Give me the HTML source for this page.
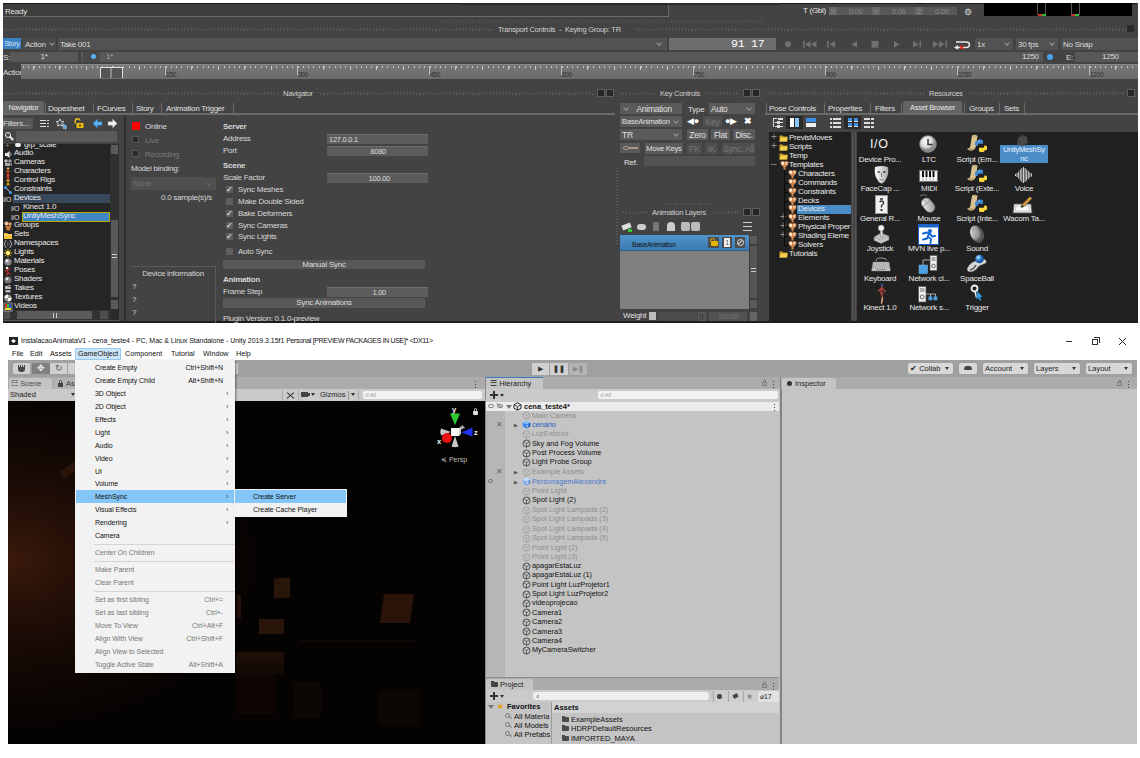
<!DOCTYPE html>
<html><head><meta charset="utf-8"><title>MeshSync</title>
<style>
html,body{margin:0;padding:0}
body{width:1140px;height:758px;position:relative;overflow:hidden;background:#fff;font-family:"Liberation Sans",sans-serif}
.a,#mb div,#mb span,#un div,#un span{position:absolute;white-space:nowrap}
#mb{position:absolute;left:0;top:0;width:1140px;height:325px;color:#dcdcdc;font-size:8px;line-height:10px;letter-spacing:-.25px}
#un{position:absolute;left:0;top:0;width:1140px;height:758px;color:#111;font-size:8px;line-height:10px;overflow:hidden}
.dots{height:3px;background:repeating-linear-gradient(115deg,#5a5a5a 0 1px,transparent 1px 3px)}
.f{background:#5c5c5c}
.dk{background:#1f1f1f}
</style></head><body>
<div id="mb">
<div style="left:3px;top:3px;width:1135px;height:320px;background:#434343;border-bottom:2.5px solid #1e1e1e;box-sizing:border-box"></div>
<!-- status bar -->
<div style="left:3px;top:3px;width:666px;height:14px;background:#3d3d3d;border-right:1px solid #6a6a6a;border-bottom:1px solid #6a6a6a;box-sizing:border-box"></div>
<div style="left:3px;top:3px;width:1134px;height:1px;background:#1a1a1a"></div>
<div style="left:5px;top:6.5px;font-size:8px;color:#e0e0e0">Ready</div>
<div style="left:460px;top:3px;width:320px;height:2px;background:#2a2a2a"></div>
<div class="dots" style="left:440px;top:20px;width:323px;opacity:.6"></div>
<div style="left:803px;top:6px;font-size:8px;color:#e8e8e8">T (Gbl)</div>
<div style="left:829px;top:7px;width:128px;height:8px;background:#585858;color:#8a8a8a;font-size:7.5px;line-height:9px"><span style="left:0;width:8px;height:8px;background:#666;text-align:center">X</span><span style="left:20px">0.00</span><span style="left:43px;width:8px;height:8px;background:#666;text-align:center">Y</span><span style="left:63px">0.00</span><span style="left:86px;width:8px;height:8px;background:#666;text-align:center">Z</span><span style="left:106px">0.00</span></div>
<div style="left:964px;top:7px;width:9px;height:8px;color:#ddd;font-size:9px">&#9881;</div>
<div style="left:984px;top:3px;width:148px;height:13px;background:#000"></div>
<div style="left:1037px;top:3px;width:1px;height:12px;background:#555"></div><div style="left:1045px;top:3px;width:1px;height:12px;background:#555"></div>
<div style="left:1071px;top:3px;width:1px;height:12px;background:#555"></div><div style="left:1079px;top:3px;width:1px;height:12px;background:#555"></div>
<div style="left:1038px;top:14px;width:4px;height:2px;background:#c33"></div><div style="left:1042px;top:14px;width:4px;height:2px;background:#3b3"></div>
<div style="left:1071px;top:14px;width:4px;height:2px;background:#c33"></div><div style="left:1075px;top:14px;width:4px;height:2px;background:#3b3"></div>
<!-- transport header -->
<div class="dots" style="left:3px;top:28px;width:490px"></div>
<div class="dots" style="left:633px;top:28px;width:494px"></div>
<div style="left:498px;top:25px;font-size:7.5px;color:#d0d0d0">Transport Controls&nbsp; -&nbsp; Keying Group: TR</div>
<div style="left:1127px;top:25px;width:7px;height:7px;background:#2a2a2a;border-radius:1px"></div>
<!-- row 1 -->
<div style="left:3px;top:38px;width:18px;height:11px;background:#3a80c2;color:#d8e8f8;font-size:7px;line-height:11px;text-align:center;overflow:hidden">Story</div>
<div style="left:23px;top:38px;width:33px;height:12px;background:#4a4a4a;font-size:8px;line-height:14.4px">&nbsp;Action<span style="left:27px;top:3px;width:3px;height:3px;border-right:1px solid #999;border-bottom:1px solid #999;transform:rotate(45deg)"></span></div>
<div style="left:58px;top:38px;width:609px;height:12px;background:#525252;font-size:8px;line-height:14.4px">&nbsp;Take 001<span style="right:6px;top:3px;width:3px;height:3px;border-right:1px solid #999;border-bottom:1px solid #999;transform:rotate(45deg)"></span></div>
<div style="left:669px;top:38px;width:107px;height:12px;background:#6e6e6e"></div>
<div style="left:731px;top:38px;font-size:11.5px;line-height:12px;color:#fff;font-family:'Liberation Mono',monospace;letter-spacing:-.2px">91 17</div>
<svg style="position:absolute;left:780px;top:38px" width="195" height="13" viewBox="0 0 195 13"><circle cx="8" cy="6.3" r="3" fill="#707070"/><path d="M23 2.8h1.6v7H23zM30.5 2.9v6.8L25 6.3zM36.5 2.9v6.8L31 6.3z" fill="#707070"/><path d="M47 2.8h1.6v7H47zM55.0 2.9v6.8L49.5 6.3z" fill="#707070"/><path d="M77.0 2.9v6.8L71.5 6.3z" fill="#707070"/><rect x="91.5" y="3" width="7" height="6.6" fill="#707070"/><path d="M114 2.9v6.8L119.5 6.3z" fill="#707070"/><path d="M133 2.9v6.8L138.5 6.3zM139.5 2.8h1.6v7h-1.6z" fill="#707070"/><path d="M153 2.9v6.8L158.5 6.3zM159 2.9v6.8L164.5 6.3zM165.5 2.8h1.6v7h-1.6z" fill="#707070"/><path d="M176 4h10q3.5 0 3.5 2.7T186 9.4h-9" fill="none" stroke="#e8e8e8" stroke-width="1.5"/><path d="M174 9.4l4-2.4v4.8z" fill="#e8e8e8"/><path d="M180 7.5l3.5 3.5M183.5 7.5L180 11" stroke="#e02020" stroke-width="1.5"/></svg>
<div style="left:975px;top:38px;width:38px;height:12px;background:#525252;line-height:14.4px">&nbsp;1x<span style="right:4px;top:3px;width:3px;height:3px;border-right:1px solid #999;border-bottom:1px solid #999;transform:rotate(45deg)"></span></div>
<div style="left:1016px;top:38px;width:42px;height:12px;background:#525252;line-height:14.4px">&nbsp;30 fps<span style="right:4px;top:3px;width:3px;height:3px;border-right:1px solid #999;border-bottom:1px solid #999;transform:rotate(45deg)"></span></div>
<div style="left:1061px;top:38px;width:77px;height:12px;background:#525252;line-height:14.4px">&nbsp;No Snap</div>
<!-- row 2 -->
<div style="left:3px;top:53px;font-size:8px;color:#ddd">S:</div>
<div style="left:10px;top:52px;width:68px;height:10px;background:#585858;text-align:center;font-size:8px">1*</div>
<div style="left:81px;top:52px;width:962px;height:10px;background:#585858"></div>
<div style="left:83px;top:52px;width:17px;height:10px;background:#4a4a4a"></div>
<div style="left:91px;top:54px;width:5px;height:5px;border-radius:3px;background:#5bb0f0"></div>
<div style="left:106px;top:52px;font-size:8px;color:#aaa">1*</div>
<div style="left:1022px;top:52px;font-size:8px;color:#ddd">1250</div>
<div style="left:1047px;top:54px;width:6px;height:6px;border-radius:3px;background:#4aa3ee"></div>
<div style="left:1066px;top:53px;font-size:8px;color:#ddd">E:</div>
<div style="left:1075px;top:52px;width:63px;height:10px;background:#585858;font-size:8px"><span style="left:27px">1250</span></div>
<!-- ruler -->
<div style="left:3px;top:68px;font-size:8px;color:#ddd">Action</div>
<div style="left:21px;top:64px;width:1117px;height:15px;background:linear-gradient(#787878,#6c6c6c)"></div>
<div style="left:21px;top:64px;width:1117px;height:1px;background:#8a8a8a"></div>
<div style="left:22.64px;top:66px;width:1114px;height:2px;background:repeating-linear-gradient(90deg,#c4c4c4 0 1px,transparent 1px 5.28px)"></div>
<div style="left:33.2px;top:66px;width:1103px;height:4px;background:repeating-linear-gradient(90deg,#c8c8c8 0 1px,transparent 1px 26.4px)"></div>
<div style="left:165.2px;top:66px;width:971px;height:9px;background:repeating-linear-gradient(90deg,#b8b8b8 0 1px,transparent 1px 132px)"></div>
<div style="left:100px;top:67px;width:23px;height:11px;background:#555;border:1px solid #ddd;border-bottom:none;box-sizing:border-box"></div>
<div style="left:110px;top:68px;width:2px;height:10px;background:#8a8a8a"></div>
<div id="rl" style="left:0;top:70px;font-size:6.5px;color:#2e2e2e"><span style="left:166px">150</span><span style="left:298px">300</span><span style="left:430px">450</span><span style="left:562px">600</span><span style="left:694px">750</span><span style="left:826px">900</span><span style="left:958px">1050</span><span style="left:1090px">1200</span></div>
<!-- section headers -->
<div class="dots" style="left:3px;top:92px;width:275px"></div>
<div class="dots" style="left:318px;top:92px;width:275px"></div>
<div style="left:283px;top:89px;font-size:7.5px;color:#d0d0d0">Navigator</div>
<div style="left:597px;top:89px;width:8px;height:8px;background:#262626;border:1px solid #5e5e5e;box-sizing:border-box"></div><div style="left:606px;top:89px;width:8px;height:8px;background:#262626;border:1px solid #5e5e5e;box-sizing:border-box"></div>
<div class="dots" style="left:620px;top:92px;width:36px"></div>
<div class="dots" style="left:704px;top:92px;width:36px"></div>
<div style="left:660px;top:89px;font-size:7.5px;color:#d0d0d0">Key Controls</div>
<div style="left:743px;top:89px;width:8px;height:8px;background:#262626;border:1px solid #5e5e5e;box-sizing:border-box"></div><div style="left:752px;top:89px;width:8px;height:8px;background:#262626;border:1px solid #5e5e5e;box-sizing:border-box"></div>
<div class="dots" style="left:765px;top:92px;width:160px"></div>
<div class="dots" style="left:968px;top:92px;width:158px"></div>
<div style="left:929px;top:89px;font-size:7.5px;color:#d0d0d0">Resources</div>
<div style="left:1127px;top:89px;width:8px;height:8px;background:#262626;border:1px solid #5e5e5e;box-sizing:border-box"></div>
<div style="left:3px;top:113px;width:612px;height:2px;background:#6a6a6a"></div>
<div style="left:3px;top:101px;width:41px;height:12px;background:#646464;border-radius:2px 2px 0 0;color:#e8e8e8;font-size:7.5px;line-height:13.5px;text-align:center">Navigator</div>
<div style="left:48px;top:102.8px;height:11px;font-size:8px;line-height:12px;color:#e0e0e0">Dopesheet</div>
<div style="left:97px;top:102.8px;height:11px;font-size:8px;line-height:12px;color:#e0e0e0">FCurves</div>
<div style="left:136px;top:102.8px;height:11px;font-size:8px;line-height:12px;color:#e0e0e0">Story</div>
<div style="left:166px;top:102.8px;height:11px;font-size:8px;line-height:12px;color:#e0e0e0">Animation Trigger</div>
<div style="left:45px;top:103px;width:1px;height:10px;background:#6a6a6a"></div>
<div style="left:93px;top:103px;width:1px;height:10px;background:#6a6a6a"></div>
<div style="left:132px;top:103px;width:1px;height:10px;background:#6a6a6a"></div>
<div style="left:161px;top:103px;width:1px;height:10px;background:#6a6a6a"></div>
<div style="left:233px;top:103px;width:1px;height:10px;background:#6a6a6a"></div>
<div style="left:3px;top:118px;width:30px;height:10.5px;background:#585858;font-size:8px;line-height:11.5px;color:#ddd">Filters...</div>
<div style="left:40px;top:120px;width:6px;height:1.2px;background:#ddd"></div>
<div style="left:47px;top:120px;width:2px;height:1.2px;background:#ddd"></div>
<div style="left:40px;top:123px;width:6px;height:1.2px;background:#ddd"></div>
<div style="left:47px;top:123px;width:2px;height:1.2px;background:#ddd"></div>
<div style="left:40px;top:126px;width:6px;height:1.2px;background:#ddd"></div>
<div style="left:47px;top:126px;width:2px;height:1.2px;background:#ddd"></div>
<svg style="position:absolute;left:56px;top:118px" width="13" height="12" viewBox="0 0 13 12"><path d="M4 1l1.2 2.4 2.6.3-1.9 1.8.5 2.6L4 6.9 1.6 8.1l.5-2.6L.2 3.7l2.6-.3z" fill="none" stroke="#e0e0e0" stroke-width=".9"/><path d="M7.5 6l3.5 2.8-1.6.3.9 1.8-1 .5-.9-1.8-1.1 1.1z" fill="#3a9af0" stroke="#e8f4ff" stroke-width=".5"/></svg>
<svg style="position:absolute;left:73px;top:117px" width="12" height="12" viewBox="0 0 12 12"><path d="M2.2 6.5V4q0-2.3 2.3-2.3T6.8 3.5" fill="none" stroke="#f0c020" stroke-width="1.4"/><rect x="3.5" y="6" width="7" height="5" rx=".8" fill="#f0bc10"/><rect x="6" y="7.5" width="2" height="2" fill="#5a4400"/></svg>
<svg style="position:absolute;left:92px;top:118px" width="26" height="11" viewBox="0 0 26 11"><path d="M.8 5.5L5.5 1v2.7H10v3.6H5.5V10z" fill="#5ab4f4" stroke="#2a70b8" stroke-width=".5"/><path d="M25.2 5.5L20.5 1v2.7H16v3.6h4.5V10z" fill="#f4f4f4" stroke="#999" stroke-width=".5"/></svg>
<div style="left:5px;top:132px;width:5.5px;height:5.5px;border:1.5px solid #f0f0f0;border-radius:3px;box-sizing:border-box"></div>
<div style="left:9px;top:137px;width:4.5px;height:2px;background:#f0f0f0;transform:rotate(45deg)"></div>
<div style="left:16px;top:131px;width:101px;height:10.5px;background:#5a5a5a"></div>
<div style="left:3px;top:144px;width:107px;height:166px;background:#252525;overflow:hidden"></div>
<div style="left:110px;top:144px;width:9px;height:166px;background:#303030"></div>
<div style="left:111px;top:145px;width:7px;height:9px;background:#5a5a5a"></div>
<div style="left:111px;top:300px;width:7px;height:9px;background:#5a5a5a"></div>
<div style="left:111px;top:220px;width:7px;height:77px;background:#585858"></div>
<div style="left:112px;top:254px;width:5px;height:1px;background:#ccc"></div>
<div style="left:112px;top:257px;width:5px;height:1px;background:#ccc"></div>
<div style="left:3px;top:310px;width:116px;height:10px;background:#333"></div>
<div style="left:4px;top:311px;width:6px;height:8px;background:#4e4e4e"></div>
<div style="left:100px;top:311px;width:8px;height:8px;background:#4e4e4e"></div>
<div style="left:17px;top:311px;width:75px;height:8px;background:#5a5a5a"></div>
<div style="left:53px;top:313px;width:1px;height:5px;background:#ccc"></div>
<div style="left:56px;top:313px;width:1px;height:5px;background:#ccc"></div>
<div style="left:110px;top:310px;width:9px;height:10px;background:#2a2a2a"></div>
<div style="left:3px;top:320px;width:116px;height:1px;background:#5a5a5a"></div>
<div style="left:124px;top:115px;width:2px;height:206px;background:#303030"></div>
<div style="left:13px;top:194px;width:97px;height:9px;background:#36485a"></div>
<div style="left:22px;top:212px;width:88px;height:10px;background:#3f86c4;border:1px solid #b8a800;box-sizing:border-box"></div>
<div style="left:24px;top:140.4px;height:10px;font-size:8px;line-height:10px;color:#e8e8e8;clip-path:inset(3.6px 0 0 0)">grp_scale</div>
<div style="left:14px;top:148.4px;height:10px;font-size:8px;line-height:10px;color:#e8e8e8">Audio</div>
<svg style="position:absolute;left:3px;top:149px" width="10" height="10" viewBox="0 0 10 10"><path d="M2 4h2l2.5-2v7L4 7H2z" fill="#e8e8e8"/><path d="M7.5 3.5q1 1.5 0 3.5" stroke="#ccc" stroke-width=".8" fill="none"/></svg>
<div style="left:14px;top:157.4px;height:10px;font-size:8px;line-height:10px;color:#e8e8e8">Cameras</div>
<svg style="position:absolute;left:3px;top:158px" width="10" height="10" viewBox="0 0 10 10"><circle cx="3" cy="3" r="1.8" fill="#bbb"/><circle cx="7" cy="3" r="1.8" fill="#999"/><path d="M2 5h5v3H2z" fill="#aaa"/><path d="M7 6l2-1v3l-2-1z" fill="#888"/></svg>
<div style="left:14px;top:166.4px;height:10px;font-size:8px;line-height:10px;color:#e8e8e8">Characters</div>
<svg style="position:absolute;left:3px;top:167px" width="10" height="10" viewBox="0 0 10 10"><circle cx="5" cy="1.5" r="1.2" fill="#e8b030"/><path d="M5 3v3.5M5 6.5L3.8 9.5M5 6.5l1.2 3M3 4.5h4" stroke="#d24a28" stroke-width="1.1" fill="none"/></svg>
<div style="left:14px;top:175.4px;height:10px;font-size:8px;line-height:10px;color:#e8e8e8">Control Rigs</div>
<svg style="position:absolute;left:3px;top:176px" width="10" height="10" viewBox="0 0 10 10"><circle cx="5" cy="1.5" r="1.2" fill="#e04030"/><path d="M5 3v3.5M5 6.5L3.8 9.5M5 6.5l1.2 3M3 4.5h4" stroke="#e0a020" stroke-width="1.1" fill="none"/></svg>
<div style="left:14px;top:184.4px;height:10px;font-size:8px;line-height:10px;color:#e8e8e8">Constraints</div>
<svg style="position:absolute;left:3px;top:185px" width="10" height="10" viewBox="0 0 10 10"><path d="M2.5 2.5l5 5" stroke="#e8e8e8" stroke-width=".9"/><circle cx="2.5" cy="2.5" r="1.6" fill="#3a9af0"/><circle cx="7.5" cy="7.5" r="1.6" fill="#3a9af0"/></svg>
<div style="left:14px;top:193.4px;height:10px;font-size:8px;line-height:10px;color:#e8e8e8">Devices</div>
<div style="left:23px;top:202.4px;height:10px;font-size:8px;line-height:10px;color:#e8e8e8">Kinect 1.0</div>
<div style="left:23px;top:211.4px;height:10px;font-size:8px;line-height:10px;color:#e8e8e8">UnityMeshSync</div>
<div style="left:14px;top:220.4px;height:10px;font-size:8px;line-height:10px;color:#e8e8e8">Groups</div>
<svg style="position:absolute;left:3px;top:221px" width="10" height="10" viewBox="0 0 10 10"><circle cx="3.5" cy="2.5" r="2" fill="#f0c8a0"/><circle cx="7" cy="3" r="1.8" fill="#d89860"/><path d="M2 5h6.5L7 8v1.5H3.5V8z" fill="#c87838"/></svg>
<div style="left:14px;top:229.4px;height:10px;font-size:8px;line-height:10px;color:#e8e8e8">Sets</div>
<svg style="position:absolute;left:3px;top:230px" width="10" height="10" viewBox="0 0 10 10"><path d="M1 3h3l1 1h4v5H1z" fill="#f0c030"/><path d="M1 5h8" stroke="#fff0a0" stroke-width=".8"/></svg>
<div style="left:14px;top:238.4px;height:10px;font-size:8px;line-height:10px;color:#e8e8e8">Namespaces</div>
<svg style="position:absolute;left:3px;top:239px" width="10" height="10" viewBox="0 0 10 10"><path d="M3.5 1.5q-1.5 0-1.5 1.5v1L1 5l1 1v1q0 1.5 1.5 1.5M6.5 1.5q1.5 0 1.5 1.5v1L9 5 8 6v1q0 1.5-1.5 1.5" stroke="#b8b8c8" stroke-width=".9" fill="none"/><path d="M4.5 3v4M6 3v4" stroke="#888" stroke-width=".6"/></svg>
<div style="left:14px;top:247.4px;height:10px;font-size:8px;line-height:10px;color:#e8e8e8">Lights</div>
<svg style="position:absolute;left:3px;top:248px" width="10" height="10" viewBox="0 0 10 10"><circle cx="5" cy="5" r="2.3" fill="#ffe040"/><path d="M5 .5v9M.5 5h9M1.8 1.8l6.4 6.4M8.2 1.8L1.8 8.2" stroke="#e8b820" stroke-width=".8"/><circle cx="5" cy="5" r="1.5" fill="#fff8a0"/></svg>
<div style="left:14px;top:256.4px;height:10px;font-size:8px;line-height:10px;color:#e8e8e8">Materials</div>
<svg style="position:absolute;left:3px;top:257px" width="10" height="10" viewBox="0 0 10 10"><circle cx="5" cy="5" r="3.6" fill="#888"/><circle cx="4" cy="3.8" r="1.6" fill="#e8e8e8"/></svg>
<div style="left:14px;top:265.4px;height:10px;font-size:8px;line-height:10px;color:#e8e8e8">Poses</div>
<svg style="position:absolute;left:3px;top:266px" width="10" height="10" viewBox="0 0 10 10"><circle cx="4" cy="2" r="1.3" fill="#eee"/><path d="M4 3.5L5 6.5 3.5 9.5M5 6.5l2.5 2M2 5l2.5-1 3-1.5" stroke="#c83030" stroke-width="1.1" fill="none"/></svg>
<div style="left:14px;top:274.4px;height:10px;font-size:8px;line-height:10px;color:#e8e8e8">Shaders</div>
<svg style="position:absolute;left:3px;top:275px" width="10" height="10" viewBox="0 0 10 10"><circle cx="5" cy="5" r="3.6" fill="#777"/><circle cx="4" cy="3.8" r="1.5" fill="#ddd"/></svg>
<div style="left:14px;top:283.4px;height:10px;font-size:8px;line-height:10px;color:#e8e8e8">Takes</div>
<svg style="position:absolute;left:3px;top:284px" width="10" height="10" viewBox="0 0 10 10"><path d="M2 3h6v2H2zM2.5 6h5v2.5h-5z" fill="#bbb"/><path d="M2 3l5.5-1.5" stroke="#ddd" stroke-width="1"/></svg>
<div style="left:14px;top:292.4px;height:10px;font-size:8px;line-height:10px;color:#e8e8e8">Textures</div>
<svg style="position:absolute;left:3px;top:293px" width="10" height="10" viewBox="0 0 10 10"><circle cx="5" cy="5" r="3.6" fill="#999"/><path d="M5 1.4A3.6 3.6 0 0 0 1.4 5H5zM5 5h3.6A3.6 3.6 0 0 1 5 8.6z" fill="#f4f4f4"/></svg>
<div style="left:14px;top:301.4px;height:10px;font-size:8px;line-height:10px;color:#e8e8e8">Videos</div>
<svg style="position:absolute;left:3px;top:302px" width="10" height="10" viewBox="0 0 10 10"><rect x="1" y="1" width="8" height="8" fill="#222" stroke="#ddd" stroke-width=".6"/><rect x="2" y="2" width="2" height="6" fill="#e03030"/><rect x="4" y="2" width="2" height="6" fill="#30c030"/><rect x="6" y="2" width="2" height="6" fill="#3050e0"/><rect x="2" y="6" width="6" height="2" fill="#e0e030"/></svg>
<div style="left:15px;top:143px;width:6px;height:4px;background:#eee;border-radius:3px"></div>
<div style="left:5px;top:141px;font-size:8px;color:#888">+</div>
<div style="left:3px;top:195px;font-size:7px;color:#ddd;letter-spacing:-.5px">I/O</div>
<div style="left:11px;top:204px;font-size:7px;color:#ddd;letter-spacing:-.5px">I/O</div>
<div style="left:11px;top:213px;font-size:7px;color:#ddd;letter-spacing:-.5px">I/O</div>
<div style="left:132px;top:122px;width:8px;height:8px;background:#f00"></div>
<div style="left:132px;top:136px;width:7px;height:7px;background:#2a2a2a;border:1px solid #555;box-sizing:border-box"></div>
<div style="left:132px;top:150px;width:7px;height:7px;background:#2a2a2a;border:1px solid #555;box-sizing:border-box"></div>
<div style="left:145px;top:122px;color:#d8d8d8">Online</div>
<div style="left:145px;top:136px;color:#7a7a7a">Live</div>
<div style="left:145px;top:150px;color:#7a7a7a">Recording</div>
<div style="left:131px;top:164px;color:#d8d8d8">Model binding:</div>
<div style="left:131px;top:177px;width:85px;height:13px;background:#4f4f4f;color:#707070;font-size:8px;line-height:13px">&nbsp;None<span style="right:5px;top:4px;width:3px;height:3px;border-right:1px solid #666;border-bottom:1px solid #666;transform:rotate(45deg)"></span></div>
<div style="left:161px;top:193px;color:#d8d8d8">0.0 sample(s)/s</div>
<div style="left:130px;top:266px;width:86px;height:57px;border:1px solid #5a5a5a;border-bottom:none;border-left:none;box-sizing:border-box"></div>
<div style="left:130px;top:269px;width:86px;text-align:center;color:#d8d8d8">Device information</div>
<div style="left:132px;top:282px;color:#d8d8d8">?</div>
<div style="left:132px;top:295px;color:#d8d8d8">?</div>
<div style="left:132px;top:308px;color:#d8d8d8">?</div>
<div style="left:223px;top:122px;color:#d8d8d8;font-weight:bold;">Server</div>
<div style="left:223px;top:134px;color:#d8d8d8;">Address</div>
<div style="left:223px;top:146px;color:#d8d8d8;">Port</div>
<div style="left:223px;top:161px;color:#d8d8d8;font-weight:bold;">Scene</div>
<div style="left:223px;top:173px;color:#d8d8d8;">Scale Factor</div>
<div style="left:327px;top:134px;width:101px;height:10px;background:#5c5c5c;border-top:1px solid #6e6e6e;box-sizing:border-box;font-size:7.5px;line-height:9px;color:#ddd;text-align:left;padding:0 2px">127.0.0.1</div>
<div style="left:327px;top:146px;width:101px;height:10px;background:#5c5c5c;border-top:1px solid #6e6e6e;box-sizing:border-box;font-size:7.5px;line-height:9px;color:#ddd;text-align:right;padding:0 42px">8080</div>
<div style="left:327px;top:173px;width:101px;height:10px;background:#5c5c5c;border-top:1px solid #6e6e6e;box-sizing:border-box;font-size:7.5px;line-height:9px;color:#ddd;text-align:right;padding:0 38px">100.00</div>
<div style="left:226px;top:186px;width:7px;height:7px;background:#5e5e5e;font-size:8px;line-height:7px;color:#fff;text-align:center">&#10003;</div>
<div style="left:238px;top:185px;color:#d8d8d8;">Sync Meshes</div>
<div style="left:226px;top:198px;width:7px;height:7px;background:#5e5e5e;font-size:8px;line-height:7px;color:#fff;text-align:center"></div>
<div style="left:238px;top:197px;color:#d8d8d8;">Make Double Sided</div>
<div style="left:226px;top:210px;width:7px;height:7px;background:#5e5e5e;font-size:8px;line-height:7px;color:#fff;text-align:center">&#10003;</div>
<div style="left:238px;top:209px;color:#d8d8d8;">Bake Deformers</div>
<div style="left:226px;top:222px;width:7px;height:7px;background:#5e5e5e;font-size:8px;line-height:7px;color:#fff;text-align:center">&#10003;</div>
<div style="left:238px;top:221px;color:#d8d8d8;">Sync Cameras</div>
<div style="left:226px;top:233px;width:7px;height:7px;background:#5e5e5e;font-size:8px;line-height:7px;color:#fff;text-align:center">&#10003;</div>
<div style="left:238px;top:232px;color:#d8d8d8;">Sync Lights</div>
<div style="left:226px;top:248px;width:7px;height:7px;background:#5e5e5e;font-size:8px;line-height:7px;color:#fff;text-align:center"></div>
<div style="left:238px;top:247px;color:#d8d8d8;">Auto Sync</div>
<div style="left:223px;top:259.5px;width:202px;height:9px;background:#585858;text-align:center;font-size:8px;line-height:9px;color:#ddd">Manual Sync</div>
<div style="left:223px;top:275px;color:#d8d8d8;font-weight:bold;">Animation</div>
<div style="left:223px;top:287px;color:#d8d8d8;">Frame Step</div>
<div style="left:327px;top:286.5px;width:101px;height:10px;background:#5c5c5c;border-top:1px solid #6e6e6e;box-sizing:border-box;font-size:7.5px;line-height:9px;color:#ddd;text-align:right;padding:0 42px">1.00</div>
<div style="left:223px;top:298px;width:202px;height:10px;background:#585858;text-align:center;font-size:8px;line-height:10px;color:#ddd">Sync Animations</div>
<div style="left:223px;top:313.5px;color:#d8d8d8;">Plugin Version: 0.1.0-preview</div>
<div style="left:616px;top:166px;width:2px;height:78px;background:repeating-linear-gradient(0deg,#5a5a5a 0 1px,transparent 1px 3px)"></div>
<div style="left:620px;top:103px;width:62px;height:11px;background:#5a5a5a;color:#e0e0e0;text-align:center;font-size:8.5px;line-height:12.6px"><span style="left:4px;top:3px;width:3px;height:3px;border-right:1px solid #999;border-bottom:1px solid #999;transform:rotate(45deg)"></span>&nbsp;&nbsp;&nbsp;Animation</div>
<div style="left:688px;top:105px;color:#e0e0e0">Type</div>
<div style="left:709px;top:103px;width:46px;height:11px;background:#5a5a5a;color:#e0e0e0;text-align:left;font-size:8.5px;line-height:12.6px">&nbsp;Auto<span style="right:4px;top:3px;width:3px;height:3px;border-right:1px solid #999;border-bottom:1px solid #999;transform:rotate(45deg)"></span></div>
<div style="left:620px;top:116px;width:62px;height:11px;background:#5a5a5a;color:#e0e0e0;text-align:left;font-size:7.6px;line-height:12.6px">&nbsp;BaseAnimation<span style="right:4px;top:3px;width:3px;height:3px;border-right:1px solid #999;border-bottom:1px solid #999;transform:rotate(45deg)"></span></div>
<div style="left:687px;top:116px;font-size:9px;line-height:11px;color:#fff">&#9664;&#9679;</div>
<div style="left:703px;top:116px;width:19px;height:11px;background:#505050;color:#787878;text-align:center;font-size:8.5px;line-height:12.6px">Key</div>
<div style="left:725px;top:116px;font-size:9px;line-height:11px;color:#fff">&#9679;&#9654;</div>
<div style="left:744px;top:116px;font-size:9px;line-height:11px;color:#fff;font-weight:bold">&#10006;</div>
<div style="left:620px;top:129px;width:62px;height:11px;background:#5a5a5a;color:#e0e0e0;text-align:left;font-size:8.5px;line-height:12.6px">&nbsp;TR<span style="right:4px;top:3px;width:3px;height:3px;border-right:1px solid #999;border-bottom:1px solid #999;transform:rotate(45deg)"></span></div>
<div style="left:687px;top:129px;width:21px;height:11px;background:#5a5a5a;color:#e0e0e0;text-align:center;font-size:8.5px;line-height:12.6px">Zero</div>
<div style="left:711px;top:129px;width:19px;height:11px;background:#5a5a5a;color:#e0e0e0;text-align:center;font-size:8.5px;line-height:12.6px">Flat</div>
<div style="left:733px;top:129px;width:22px;height:11px;background:#5a5a5a;color:#e0e0e0;text-align:center;font-size:8.5px;line-height:12.6px">Disc.</div>
<div style="left:620px;top:143px;width:20px;height:10px;background:#5a5a5a;color:#e0e0e0;text-align:center;font-size:8.5px;line-height:11.6px"></div>
<div style="left:623px;top:146px;width:6px;height:4px;border:1px solid #a98;border-radius:3px;box-sizing:border-box"></div>
<div style="left:629px;top:147px;width:9px;height:2px;background:#a98"></div>
<div style="left:645px;top:143px;width:38px;height:11px;background:#5a5a5a;color:#e0e0e0;text-align:center;font-size:7.6px;line-height:12.6px">Move Keys</div>
<div style="left:687px;top:143px;width:15px;height:11px;background:#4e4e4e;color:#767676;text-align:center;font-size:8.5px;line-height:12.6px">FK</div>
<div style="left:705px;top:143px;width:13px;height:11px;background:#4e4e4e;color:#767676;text-align:center;font-size:8.5px;line-height:12.6px">IK</div>
<div style="left:722px;top:143px;width:33px;height:11px;background:#4e4e4e;color:#767676;text-align:center;font-size:8.5px;line-height:12.6px">Sync. All</div>
<div style="left:624px;top:157.5px;color:#e0e0e0">Ref.</div>
<div style="left:644px;top:156px;width:111px;height:10px;background:#525252;color:#e0e0e0;text-align:center;font-size:8.5px;line-height:11.6px"></div>
<div style="left:665px;top:203px;width:48px;height:2px;background:repeating-linear-gradient(90deg,#5a5a5a 0 1px,transparent 1px 3px)"></div>
<div class="dots" style="left:620px;top:211px;width:28px"></div><div class="dots" style="left:712px;top:211px;width:28px"></div>
<div style="left:652px;top:208px;font-size:7.5px;color:#d0d0d0">Animation Layers</div>
<div style="left:743px;top:208px;width:8px;height:8px;background:#262626;border:1px solid #5e5e5e;box-sizing:border-box"></div>
<div style="left:752px;top:208px;width:8px;height:8px;background:#262626;border:1px solid #5e5e5e;box-sizing:border-box"></div>
<div style="left:622px;top:224px;width:9px;height:5px;background:#ddd;transform:rotate(-20deg)"></div>
<div style="left:628px;top:229px;width:4px;height:3px;background:#3c3"></div>
<div style="left:637px;top:224px;width:9px;height:6px;background:#ccc;border-radius:3px"></div>
<div style="left:653px;top:222px;width:6px;height:9px;background:#777;border-radius:1px"></div>
<div style="left:667px;top:222px;width:8px;height:9px;background:#ccc;border-radius:4px 4px 0 0"></div>
<div style="left:681px;top:222px;width:9px;height:9px;background:#bbb;border-radius:2px"></div>
<div style="left:691px;top:222px;width:9px;height:9px;background:#bbb;border-radius:2px"></div>
<div style="left:743px;top:222px;width:9px;height:1px;background:#ccc"></div>
<div style="left:743px;top:226px;width:9px;height:1px;background:#ccc"></div>
<div style="left:743px;top:230px;width:9px;height:1px;background:#ccc"></div>
<div style="left:620px;top:235px;width:129px;height:74px;background:#808080"></div>
<div style="left:620px;top:235px;width:129px;height:16px;background:linear-gradient(#5095ca,#3b7bb0);border-bottom:1px solid #2a5f90;box-sizing:border-box"></div>
<div style="left:708px;top:237px;width:11px;height:11px;background:#4c4c4c"></div>
<div style="left:722px;top:237px;width:10px;height:11px;background:#4c4c4c"></div>
<div style="left:735px;top:237px;width:10px;height:11px;background:#4c4c4c"></div>
<div style="left:632px;top:240px;font-size:7px;color:#111">BaseAnimation</div>
<div style="left:711px;top:241px;width:7px;height:5px;background:#e8b400;border-radius:1px"></div>
<div style="left:710px;top:238px;width:5px;height:5px;border:1px solid #e8b400;border-radius:3px;box-sizing:border-box"></div>
<div style="left:724px;top:238px;width:6px;height:9px;background:#f2f2f2;font-size:7px;line-height:9px;color:#555;text-align:center">1</div>
<div style="left:736.5px;top:239px;width:7px;height:7px;border:1px solid #ddd;border-radius:4px;box-sizing:border-box"></div>
<div style="left:737px;top:242px;width:6px;height:1px;background:#ddd;transform:rotate(-45deg)"></div>
<div style="left:749px;top:235px;width:9px;height:74px;background:#3c3c3c"></div>
<div style="left:750px;top:236px;width:7px;height:8px;background:#5a5a5a"></div>
<div style="left:750px;top:300px;width:7px;height:8px;background:#5a5a5a"></div>
<div style="left:750px;top:246px;width:7px;height:52px;background:#555"></div>
<div style="left:751px;top:268px;width:5px;height:1px;background:#ccc"></div>
<div style="left:751px;top:271px;width:5px;height:1px;background:#ccc"></div>
<div style="left:623px;top:311px;color:#e0e0e0">Weight</div>
<div style="left:649px;top:312px;width:7px;height:8px;background:#bbb"></div>
<div style="left:658px;top:312px;width:39px;height:9px;background:#4c4c4c"></div>
<div style="left:698px;top:312px;width:8px;height:9px;background:#4c4c4c;border:1px solid #5c5c5c;box-sizing:border-box"></div>
<div style="left:709px;top:312px;width:38px;height:9px;background:#525252;font-size:7px;color:#777;line-height:9px;text-align:center">100.00</div>
<div style="left:750px;top:312px;width:7px;height:9px;background:#666"></div>
<div style="left:765px;top:113px;width:373px;height:2px;background:#6a6a6a"></div>
<div style="left:903px;top:101px;width:59px;height:12px;background:#646464;border-radius:2px 2px 0 0;color:#e8e8e8;font-size:7.5px;line-height:13.5px;text-align:center">Asset Browser</div>
<div style="left:769px;top:102.8px;height:11px;font-size:8px;line-height:12px;color:#e0e0e0">Pose Controls</div>
<div style="left:828px;top:102.8px;height:11px;font-size:8px;line-height:12px;color:#e0e0e0">Properties</div>
<div style="left:875px;top:102.8px;height:11px;font-size:8px;line-height:12px;color:#e0e0e0">Filters</div>
<div style="left:969px;top:102.8px;height:11px;font-size:8px;line-height:12px;color:#e0e0e0">Groups</div>
<div style="left:1004px;top:102.8px;height:11px;font-size:8px;line-height:12px;color:#e0e0e0">Sets</div>
<div style="left:766px;top:103px;width:1px;height:10px;background:#6a6a6a"></div>
<div style="left:824px;top:103px;width:1px;height:10px;background:#6a6a6a"></div>
<div style="left:870px;top:103px;width:1px;height:10px;background:#6a6a6a"></div>
<div style="left:901px;top:103px;width:1px;height:10px;background:#6a6a6a"></div>
<div style="left:964px;top:103px;width:1px;height:10px;background:#6a6a6a"></div>
<div style="left:999px;top:103px;width:1px;height:10px;background:#6a6a6a"></div>
<div style="left:1024px;top:103px;width:1px;height:10px;background:#6a6a6a"></div>
<div style="left:773px;top:118px;width:1px;height:9px;background:#ddd"></div>
<div style="left:773px;top:118px;width:4px;height:1px;background:#ddd"></div>
<div style="left:775px;top:122px;width:8px;height:1px;background:#ddd"></div>
<div style="left:775px;top:126px;width:8px;height:1px;background:#ddd"></div>
<div style="left:778px;top:118px;width:5px;height:2px;background:#ddd"></div>
<div style="left:777px;top:121px;width:3px;height:3px;background:#ddd"></div>
<div style="left:777px;top:125px;width:3px;height:3px;background:#ddd"></div>
<div style="left:786px;top:116px;width:17px;height:13px;background:#2a2a2a"></div>
<div style="left:790px;top:118px;width:4px;height:9px;background:#fff"></div>
<div style="left:795px;top:118px;width:4px;height:9px;background:#8cc4f4"></div>
<div style="left:806px;top:118px;width:10px;height:4px;background:#3a8ee0"></div>
<div style="left:806px;top:123px;width:10px;height:4px;background:#f0f0f0"></div>
<div style="left:830px;top:118px;width:2px;height:2px;background:#ddd"></div>
<div style="left:833px;top:118px;width:8px;height:1.5px;background:#ddd"></div>
<div style="left:830px;top:122px;width:2px;height:2px;background:#ddd"></div>
<div style="left:833px;top:122px;width:8px;height:1.5px;background:#ddd"></div>
<div style="left:830px;top:126px;width:2px;height:2px;background:#ddd"></div>
<div style="left:833px;top:126px;width:8px;height:1.5px;background:#ddd"></div>
<div style="left:844px;top:116px;width:17px;height:13px;background:#2a2a2a"></div>
<div style="left:848px;top:118px;width:4px;height:3px;background:#3a8ee0"></div>
<div style="left:848px;top:121px;width:4px;height:1px;background:#ddd"></div>
<div style="left:848px;top:123px;width:4px;height:3px;background:#3a8ee0"></div>
<div style="left:848px;top:126px;width:4px;height:1px;background:#ddd"></div>
<div style="left:854px;top:118px;width:4px;height:3px;background:#3a8ee0"></div>
<div style="left:854px;top:121px;width:4px;height:1px;background:#ddd"></div>
<div style="left:854px;top:123px;width:4px;height:3px;background:#3a8ee0"></div>
<div style="left:854px;top:126px;width:4px;height:1px;background:#ddd"></div>
<div style="left:864px;top:118px;width:6px;height:1.5px;background:#ddd"></div>
<div style="left:871px;top:118px;width:3px;height:1.5px;background:#ddd"></div>
<div style="left:864px;top:122px;width:6px;height:1.5px;background:#ddd"></div>
<div style="left:871px;top:122px;width:3px;height:1.5px;background:#ddd"></div>
<div style="left:864px;top:126px;width:6px;height:1.5px;background:#ddd"></div>
<div style="left:871px;top:126px;width:3px;height:1.5px;background:#ddd"></div>
<div style="left:769px;top:132px;width:82px;height:188.5px;background:#212121"></div>
<div style="left:857px;top:132px;width:281px;height:188.5px;background:#212121"></div>
<div style="left:852px;top:132px;width:1px;height:187px;background:#555"></div>
<div style="left:855px;top:132px;width:1px;height:187px;background:#555"></div>
<div style="left:797px;top:205px;width:54px;height:9px;background:#4a8cc6"></div>
<div style="left:789px;top:133px;width:62px;height:10px;font-size:8px;line-height:10px;color:#e8e8e8;overflow:hidden">PrevisMoves</div>
<svg style="position:absolute;left:779px;top:133.5px" width="9" height="8" viewBox="0 0 9 8"><path d="M.5 1.5h3l1 1h4v5h-8z" fill="#c89820"/><path d="M.5 7.5l1.2-4h7l-1.2 4z" fill="#f4d050"/></svg>
<div style="left:771px;top:132px;font-size:10px;line-height:10px;color:#909090">+</div>
<div style="left:789px;top:142px;width:62px;height:10px;font-size:8px;line-height:10px;color:#e8e8e8;overflow:hidden">Scripts</div>
<svg style="position:absolute;left:779px;top:142.5px" width="9" height="8" viewBox="0 0 9 8"><path d="M.5 1.5h3l1 1h4v5h-8z" fill="#c89820"/><path d="M.5 7.5l1.2-4h7l-1.2 4z" fill="#f4d050"/></svg>
<div style="left:771px;top:141px;font-size:10px;line-height:10px;color:#909090">+</div>
<div style="left:789px;top:151px;width:62px;height:10px;font-size:8px;line-height:10px;color:#e8e8e8;overflow:hidden">Temp</div>
<svg style="position:absolute;left:779px;top:151.5px" width="9" height="8" viewBox="0 0 9 8"><path d="M.5 1.5h3l1 1h4v5h-8z" fill="#c89820"/><path d="M.5 7.5l1.2-4h7l-1.2 4z" fill="#f4d050"/></svg>
<div style="left:789px;top:160px;width:62px;height:10px;font-size:8px;line-height:10px;color:#e8e8e8;overflow:hidden">Templates</div>
<svg style="position:absolute;left:780px;top:159.5px" width="9" height="10" viewBox="0 0 9 10"><path d="M.8 1.8q1.7-1.6 3.7 0q2-1.6 3.7 0q.9 2.6-1.7 4.4l-1 .8v2.5h-2V7l-1-.8Q-.1 4.4.8 1.8z" fill="#d08850"/><path d="M1.5 2.2q1.2-1 2.5 0v2.3q-1.3.6-2.5 0z" fill="#fff0e0"/><path d="M5 2.2q1.2-1 2.5 0v2q-1.3.6-2.5 0z" fill="#f0c098"/></svg>
<div style="left:771px;top:159px;font-size:10px;line-height:10px;color:#909090">&#8211;</div>
<div style="left:798px;top:169px;width:53px;height:10px;font-size:8px;line-height:10px;color:#e8e8e8;overflow:hidden">Characters</div>
<svg style="position:absolute;left:788px;top:168.5px" width="9" height="10" viewBox="0 0 9 10"><path d="M.8 1.8q1.7-1.6 3.7 0q2-1.6 3.7 0q.9 2.6-1.7 4.4l-1 .8v2.5h-2V7l-1-.8Q-.1 4.4.8 1.8z" fill="#d08850"/><path d="M1.5 2.2q1.2-1 2.5 0v2.3q-1.3.6-2.5 0z" fill="#fff0e0"/><path d="M5 2.2q1.2-1 2.5 0v2q-1.3.6-2.5 0z" fill="#f0c098"/></svg>
<div style="left:798px;top:178px;width:53px;height:10px;font-size:8px;line-height:10px;color:#e8e8e8;overflow:hidden">Commands</div>
<svg style="position:absolute;left:788px;top:177.5px" width="9" height="10" viewBox="0 0 9 10"><path d="M.8 1.8q1.7-1.6 3.7 0q2-1.6 3.7 0q.9 2.6-1.7 4.4l-1 .8v2.5h-2V7l-1-.8Q-.1 4.4.8 1.8z" fill="#d08850"/><path d="M1.5 2.2q1.2-1 2.5 0v2.3q-1.3.6-2.5 0z" fill="#fff0e0"/><path d="M5 2.2q1.2-1 2.5 0v2q-1.3.6-2.5 0z" fill="#f0c098"/></svg>
<div style="left:798px;top:187px;width:53px;height:10px;font-size:8px;line-height:10px;color:#e8e8e8;overflow:hidden">Constraints</div>
<svg style="position:absolute;left:788px;top:186.5px" width="9" height="10" viewBox="0 0 9 10"><path d="M.8 1.8q1.7-1.6 3.7 0q2-1.6 3.7 0q.9 2.6-1.7 4.4l-1 .8v2.5h-2V7l-1-.8Q-.1 4.4.8 1.8z" fill="#d08850"/><path d="M1.5 2.2q1.2-1 2.5 0v2.3q-1.3.6-2.5 0z" fill="#fff0e0"/><path d="M5 2.2q1.2-1 2.5 0v2q-1.3.6-2.5 0z" fill="#f0c098"/></svg>
<div style="left:798px;top:196px;width:53px;height:10px;font-size:8px;line-height:10px;color:#e8e8e8;overflow:hidden">Decks</div>
<svg style="position:absolute;left:788px;top:195.5px" width="9" height="10" viewBox="0 0 9 10"><path d="M.8 1.8q1.7-1.6 3.7 0q2-1.6 3.7 0q.9 2.6-1.7 4.4l-1 .8v2.5h-2V7l-1-.8Q-.1 4.4.8 1.8z" fill="#d08850"/><path d="M1.5 2.2q1.2-1 2.5 0v2.3q-1.3.6-2.5 0z" fill="#fff0e0"/><path d="M5 2.2q1.2-1 2.5 0v2q-1.3.6-2.5 0z" fill="#f0c098"/></svg>
<div style="left:798px;top:204px;width:53px;height:10px;font-size:8px;line-height:10px;color:#e8e8e8;overflow:hidden">Devices</div>
<svg style="position:absolute;left:788px;top:203.5px" width="9" height="10" viewBox="0 0 9 10"><path d="M.8 1.8q1.7-1.6 3.7 0q2-1.6 3.7 0q.9 2.6-1.7 4.4l-1 .8v2.5h-2V7l-1-.8Q-.1 4.4.8 1.8z" fill="#d08850"/><path d="M1.5 2.2q1.2-1 2.5 0v2.3q-1.3.6-2.5 0z" fill="#fff0e0"/><path d="M5 2.2q1.2-1 2.5 0v2q-1.3.6-2.5 0z" fill="#f0c098"/></svg>
<div style="left:798px;top:213px;width:53px;height:10px;font-size:8px;line-height:10px;color:#e8e8e8;overflow:hidden">Elements</div>
<svg style="position:absolute;left:788px;top:212.5px" width="9" height="10" viewBox="0 0 9 10"><path d="M.8 1.8q1.7-1.6 3.7 0q2-1.6 3.7 0q.9 2.6-1.7 4.4l-1 .8v2.5h-2V7l-1-.8Q-.1 4.4.8 1.8z" fill="#d08850"/><path d="M1.5 2.2q1.2-1 2.5 0v2.3q-1.3.6-2.5 0z" fill="#fff0e0"/><path d="M5 2.2q1.2-1 2.5 0v2q-1.3.6-2.5 0z" fill="#f0c098"/></svg>
<div style="left:780px;top:212px;font-size:10px;line-height:10px;color:#909090">+</div>
<div style="left:798px;top:222px;width:53px;height:10px;font-size:8px;line-height:10px;color:#e8e8e8;overflow:hidden">Physical Proper</div>
<svg style="position:absolute;left:788px;top:221.5px" width="9" height="10" viewBox="0 0 9 10"><path d="M.8 1.8q1.7-1.6 3.7 0q2-1.6 3.7 0q.9 2.6-1.7 4.4l-1 .8v2.5h-2V7l-1-.8Q-.1 4.4.8 1.8z" fill="#d08850"/><path d="M1.5 2.2q1.2-1 2.5 0v2.3q-1.3.6-2.5 0z" fill="#fff0e0"/><path d="M5 2.2q1.2-1 2.5 0v2q-1.3.6-2.5 0z" fill="#f0c098"/></svg>
<div style="left:780px;top:221px;font-size:10px;line-height:10px;color:#909090">+</div>
<div style="left:798px;top:231px;width:53px;height:10px;font-size:8px;line-height:10px;color:#e8e8e8;overflow:hidden">Shading Eleme</div>
<svg style="position:absolute;left:788px;top:230.5px" width="9" height="10" viewBox="0 0 9 10"><path d="M.8 1.8q1.7-1.6 3.7 0q2-1.6 3.7 0q.9 2.6-1.7 4.4l-1 .8v2.5h-2V7l-1-.8Q-.1 4.4.8 1.8z" fill="#d08850"/><path d="M1.5 2.2q1.2-1 2.5 0v2.3q-1.3.6-2.5 0z" fill="#fff0e0"/><path d="M5 2.2q1.2-1 2.5 0v2q-1.3.6-2.5 0z" fill="#f0c098"/></svg>
<div style="left:780px;top:230px;font-size:10px;line-height:10px;color:#909090">+</div>
<div style="left:798px;top:240px;width:53px;height:10px;font-size:8px;line-height:10px;color:#e8e8e8;overflow:hidden">Solvers</div>
<svg style="position:absolute;left:788px;top:239.5px" width="9" height="10" viewBox="0 0 9 10"><path d="M.8 1.8q1.7-1.6 3.7 0q2-1.6 3.7 0q.9 2.6-1.7 4.4l-1 .8v2.5h-2V7l-1-.8Q-.1 4.4.8 1.8z" fill="#d08850"/><path d="M1.5 2.2q1.2-1 2.5 0v2.3q-1.3.6-2.5 0z" fill="#fff0e0"/><path d="M5 2.2q1.2-1 2.5 0v2q-1.3.6-2.5 0z" fill="#f0c098"/></svg>
<div style="left:789px;top:249px;width:62px;height:10px;font-size:8px;line-height:10px;color:#e8e8e8;overflow:hidden">Tutorials</div>
<svg style="position:absolute;left:779px;top:249.5px" width="9" height="8" viewBox="0 0 9 8"><path d="M.5 1.5h3l1 1h4v5h-8z" fill="#c89820"/><path d="M.5 7.5l1.2-4h7l-1.2 4z" fill="#f4d050"/></svg>
<div style="left:784px;top:170px;width:1px;height:76px;background:#0c0c0c"></div>
<div style="left:784px;top:174px;width:4px;height:1px;background:#0c0c0c"></div>
<div style="left:784px;top:183px;width:4px;height:1px;background:#0c0c0c"></div>
<div style="left:784px;top:192px;width:4px;height:1px;background:#0c0c0c"></div>
<div style="left:784px;top:201px;width:4px;height:1px;background:#0c0c0c"></div>
<div style="left:784px;top:209px;width:4px;height:1px;background:#0c0c0c"></div>
<div style="left:784px;top:218px;width:4px;height:1px;background:#0c0c0c"></div>
<div style="left:784px;top:227px;width:4px;height:1px;background:#0c0c0c"></div>
<div style="left:784px;top:236px;width:4px;height:1px;background:#0c0c0c"></div>
<div style="left:784px;top:245px;width:4px;height:1px;background:#0c0c0c"></div>
<div style="left:1000px;top:145px;width:48px;height:18px;background:#4a8cc6"></div>
<div style="left:1000px;top:146px;width:48px;text-align:center;font-size:7.5px;line-height:8.5px;color:#e8f0ff;white-space:normal">UnityMeshSy<br>nc</div>
<div style="left:850px;top:155px;width:60px;height:10px;text-align:center;font-size:8px;line-height:10px;color:#e8e8e8">Device Pro...</div>
<div style="left:899px;top:155px;width:60px;height:10px;text-align:center;font-size:8px;line-height:10px;color:#e8e8e8">LTC</div>
<div style="left:947px;top:155px;width:60px;height:10px;text-align:center;font-size:8px;line-height:10px;color:#e8e8e8">Script (Em...</div>
<div style="left:850px;top:184.3px;width:60px;height:10px;text-align:center;font-size:8px;line-height:10px;color:#e8e8e8">FaceCap ...</div>
<div style="left:899px;top:184.3px;width:60px;height:10px;text-align:center;font-size:8px;line-height:10px;color:#e8e8e8">MIDI</div>
<div style="left:947px;top:184.3px;width:60px;height:10px;text-align:center;font-size:8px;line-height:10px;color:#e8e8e8">Script (Exte...</div>
<div style="left:994px;top:184.3px;width:60px;height:10px;text-align:center;font-size:8px;line-height:10px;color:#e8e8e8">Voice</div>
<div style="left:850px;top:214px;width:60px;height:10px;text-align:center;font-size:8px;line-height:10px;color:#e8e8e8">General R...</div>
<div style="left:899px;top:214px;width:60px;height:10px;text-align:center;font-size:8px;line-height:10px;color:#e8e8e8">Mouse</div>
<div style="left:947px;top:214px;width:60px;height:10px;text-align:center;font-size:8px;line-height:10px;color:#e8e8e8">Script (Inte...</div>
<div style="left:994px;top:214px;width:60px;height:10px;text-align:center;font-size:8px;line-height:10px;color:#e8e8e8">Wacom Ta...</div>
<div style="left:850px;top:244px;width:60px;height:10px;text-align:center;font-size:8px;line-height:10px;color:#e8e8e8">Joystick</div>
<div style="left:899px;top:244px;width:60px;height:10px;text-align:center;font-size:8px;line-height:10px;color:#e8e8e8">MVN live p...</div>
<div style="left:947px;top:244px;width:60px;height:10px;text-align:center;font-size:8px;line-height:10px;color:#e8e8e8">Sound</div>
<div style="left:850px;top:273.5px;width:60px;height:10px;text-align:center;font-size:8px;line-height:10px;color:#e8e8e8">Keyboard</div>
<div style="left:899px;top:273.5px;width:60px;height:10px;text-align:center;font-size:8px;line-height:10px;color:#e8e8e8">Network cl...</div>
<div style="left:947px;top:273.5px;width:60px;height:10px;text-align:center;font-size:8px;line-height:10px;color:#e8e8e8">SpaceBall</div>
<div style="left:850px;top:303.3px;width:60px;height:10px;text-align:center;font-size:8px;line-height:10px;color:#e8e8e8">Kinect 1.0</div>
<div style="left:899px;top:303.3px;width:60px;height:10px;text-align:center;font-size:8px;line-height:10px;color:#e8e8e8">Network s...</div>
<div style="left:947px;top:303.3px;width:60px;height:10px;text-align:center;font-size:8px;line-height:10px;color:#e8e8e8">Trigger</div>
<div style="left:870px;top:137px;font-size:12.5px;line-height:14px;color:#f4f4f4;letter-spacing:.6px">I/O</div>
<svg style="position:absolute;left:919.0px;top:135.0px" width="18" height="18" viewBox="0 0 18 18"><defs><radialGradient id="ck" cx=".4" cy=".35"><stop offset="0" stop-color="#fff"/><stop offset=".7" stop-color="#d8d8d8"/><stop offset="1" stop-color="#888"/></radialGradient></defs><circle cx="9" cy="9" r="8.3" fill="url(#ck)" stroke="#9a9a9a" stroke-width=".8"/><path d="M9 4v5.5h4.5" stroke="#333" stroke-width="1.5" fill="none"/></svg>
<svg style="position:absolute;left:966.0px;top:134.0px" width="22" height="20" viewBox="0 0 22 20"><path d="M6 1.5q3-1.5 5.5.5l-1.5 10q-1 4.5-5 4.5q-3.5 0-3.5-2.2q2.5.2 2.8-2z" fill="#d9c392"/><path d="M6 1.5q2.5 1 5.5.5" stroke="#a89060" stroke-width=".8" fill="none"/><path d="M1.5 14.3q.3 2.2 3.5 2.2q2.5 0 3.8-2z" fill="#b8a070"/><path d="M11.5 7q0-1.5 1.5-1.5h2.5q1.5 0 1.5 1.5v2.8h-3.8q-1.5 0-1.5 1.5v.8h-1.2q-1.5 0-1.5-1.5v-1.8q0-1.5 1.5-1.5h1z" fill="#3f8ad4"/><path d="M18.5 16.5q0 1.5-1.5 1.5h-2.5q-1.5 0-1.5-1.5v-2.8h3.8q1.5 0 1.5-1.5v-.8h1.2q1.5 0 1.5 1.5v1.8q0 1.5-1.5 1.5h-1z" fill="#ffd83e"/><circle cx="13" cy="7" r=".6" fill="#fff"/></svg>
<svg style="position:absolute;left:966.0px;top:164.0px" width="22" height="20" viewBox="0 0 22 20"><path d="M6 1.5q3-1.5 5.5.5l-1.5 10q-1 4.5-5 4.5q-3.5 0-3.5-2.2q2.5.2 2.8-2z" fill="#d9c392"/><path d="M6 1.5q2.5 1 5.5.5" stroke="#a89060" stroke-width=".8" fill="none"/><path d="M1.5 14.3q.3 2.2 3.5 2.2q2.5 0 3.8-2z" fill="#b8a070"/><path d="M11.5 7q0-1.5 1.5-1.5h2.5q1.5 0 1.5 1.5v2.8h-3.8q-1.5 0-1.5 1.5v.8h-1.2q-1.5 0-1.5-1.5v-1.8q0-1.5 1.5-1.5h1z" fill="#3f8ad4"/><path d="M18.5 16.5q0 1.5-1.5 1.5h-2.5q-1.5 0-1.5-1.5v-2.8h3.8q1.5 0 1.5-1.5v-.8h1.2q1.5 0 1.5 1.5v1.8q0 1.5-1.5 1.5h-1z" fill="#ffd83e"/><circle cx="13" cy="7" r=".6" fill="#fff"/></svg>
<svg style="position:absolute;left:966.0px;top:194.0px" width="22" height="20" viewBox="0 0 22 20"><path d="M6 1.5q3-1.5 5.5.5l-1.5 10q-1 4.5-5 4.5q-3.5 0-3.5-2.2q2.5.2 2.8-2z" fill="#d9c392"/><path d="M6 1.5q2.5 1 5.5.5" stroke="#a89060" stroke-width=".8" fill="none"/><path d="M1.5 14.3q.3 2.2 3.5 2.2q2.5 0 3.8-2z" fill="#b8a070"/><path d="M11.5 7q0-1.5 1.5-1.5h2.5q1.5 0 1.5 1.5v2.8h-3.8q-1.5 0-1.5 1.5v.8h-1.2q-1.5 0-1.5-1.5v-1.8q0-1.5 1.5-1.5h1z" fill="#3f8ad4"/><path d="M18.5 16.5q0 1.5-1.5 1.5h-2.5q-1.5 0-1.5-1.5v-2.8h3.8q1.5 0 1.5-1.5v-.8h1.2q1.5 0 1.5 1.5v1.8q0 1.5-1.5 1.5h-1z" fill="#ffd83e"/><circle cx="13" cy="7" r=".6" fill="#fff"/></svg>
<svg style="position:absolute;left:1014.0px;top:133.0px" width="16" height="14" viewBox="0 0 16 14"><path d="M3 12l1-7 4-3 5 2 1 6-5 3z" fill="#454545"/><path d="M4 5l4 2 5-3M8 7v6" stroke="#555" stroke-width=".8" fill="none"/></svg>
<svg style="position:absolute;left:872.5px;top:165.0px" width="17" height="19" viewBox="0 0 17 19"><defs><linearGradient id="mk" x1="0" x2="1"><stop offset="0" stop-color="#fff"/><stop offset="1" stop-color="#a8a8a8"/></linearGradient></defs><path d="M2 2q6.5-2 13 0q1 8-2 12q-2 4-4.5 4.5q-2.5-.5-4.5-4.5q-3-4-2-12z" fill="url(#mk)"/><path d="M4 7q2-1.5 3.5 0q-1.5 1.5-3.5 0zM9.5 7q2-1.5 3.5 0q-2 1.5-3.5 0z" fill="#222"/><path d="M8.5 8v4M6.5 14.5q2 1 4 0" stroke="#666" stroke-width=".8" fill="none"/></svg>
<svg style="position:absolute;left:918.5px;top:169.5px" width="19" height="12" viewBox="0 0 19 12"><rect x=".5" y=".5" width="18" height="11" fill="#f4f4f4" stroke="#777"/><path d="M4 .5v11M7.5 .5v11M11 .5v11M14.5 .5v11" stroke="#888" stroke-width=".6"/><path d="M3 1h2v6H3zM6.5 1h2v6h-2zM10 1h2v6h-2zM13.5 1h2v6h-2z" fill="#111"/></svg>
<svg style="position:absolute;left:1013.5px;top:167.0px" width="19" height="16" viewBox="0 0 19 16"><rect x="1.0" y="7.0" width=".9" height="2" fill="#e4e4e4"/><rect x="2.6" y="6.0" width=".9" height="4" fill="#e4e4e4"/><rect x="4.2" y="4.5" width=".9" height="7" fill="#e4e4e4"/><rect x="5.8" y="2.5" width=".9" height="11" fill="#e4e4e4"/><rect x="7.4" y="1.0" width=".9" height="14" fill="#e4e4e4"/><rect x="9.0" y="0.0" width=".9" height="16" fill="#e4e4e4"/><rect x="10.6" y="1.0" width=".9" height="14" fill="#e4e4e4"/><rect x="12.2" y="2.5" width=".9" height="11" fill="#e4e4e4"/><rect x="13.8" y="4.0" width=".9" height="8" fill="#e4e4e4"/><rect x="15.4" y="5.5" width=".9" height="5" fill="#e4e4e4"/><rect x="17.0" y="6.5" width=".9" height="3" fill="#e4e4e4"/></svg>
<svg style="position:absolute;left:874.5px;top:194.5px" width="13" height="19" viewBox="0 0 13 19"><rect x=".5" y=".5" width="12" height="18" fill="#efefef" stroke="#999"/><path d="M5 4h3M4.5 7q2-2 4 0q.5 2-2 3.5v2" stroke="#333" stroke-width="1.3" fill="none"/><rect x="5.5" y="14" width="2" height="2" fill="#333"/></svg>
<svg style="position:absolute;left:918.0px;top:194.0px" width="20" height="20" viewBox="0 0 20 20"><defs><linearGradient id="ms" x1="0" y1="0" x2="1" y2="1"><stop offset="0" stop-color="#fff"/><stop offset="1" stop-color="#8a8a8a"/></linearGradient></defs><path d="M9 2q-4-3-7 0" stroke="#888" stroke-width=".8" fill="none"/><g transform="rotate(-40 10 11)"><rect x="5" y="3.5" width="10" height="15.5" rx="5" fill="url(#ms)" stroke="#777" stroke-width=".6"/><path d="M5 9h10M10 3.5v5.5" stroke="#777" stroke-width=".6"/></g></svg>
<svg style="position:absolute;left:1012.0px;top:194.0px" width="22" height="20" viewBox="0 0 22 20"><path d="M2 10h17l1 9H1z" fill="#ececec" stroke="#555" stroke-width=".8"/><path d="M4 12h13l.5 5H3.5z" fill="#fafafa" stroke="#999" stroke-width=".5"/><path d="M9 13.5l1-3 8-8 2 2-8 8z" fill="#e0a030" stroke="#444" stroke-width=".6"/><path d="M9 13.5l1-3 2 2z" fill="#333"/></svg>
<svg style="position:absolute;left:872.5px;top:224.0px" width="17" height="20" viewBox="0 0 17 20"><path d="M1 13l7-4 8 3v4l-8 3.5-7-3z" fill="#c8c8c8" stroke="#666" stroke-width=".6"/><path d="M1 13l7 3 8-4" stroke="#888" stroke-width=".6" fill="none"/><path d="M7.5 13l-.5-8h2.5l.5 8z" fill="#e8e8e8" stroke="#555" stroke-width=".5"/><circle cx="8.2" cy="4" r="3" fill="#f4f4f4" stroke="#777" stroke-width=".5"/></svg>
<svg style="position:absolute;left:917.5px;top:223.5px" width="21" height="21" viewBox="0 0 21 21"><rect x=".5" y=".5" width="20" height="20" fill="#fff" stroke="#1c62c8"/><rect x=".5" y=".5" width="20" height="3" fill="#1c62c8"/><circle cx="12" cy="7" r="2" fill="#1767d8"/><path d="M5 9.5l4-1 3 1 2 3 3-.5M11 10l-2 4.5-4 1M10 13l3 2-.5 4" stroke="#1767d8" stroke-width="2" fill="none" stroke-linecap="round" stroke-linejoin="round"/></svg>
<svg style="position:absolute;left:968.0px;top:224.0px" width="18" height="20" viewBox="0 0 18 20"><defs><radialGradient id="sd" cx=".35" cy=".35"><stop offset="0" stop-color="#fff"/><stop offset=".6" stop-color="#bbb"/><stop offset="1" stop-color="#555"/></radialGradient></defs><ellipse cx="9" cy="10" rx="6.5" ry="9" transform="rotate(-25 9 10)" fill="url(#sd)"/><ellipse cx="8" cy="9" rx="3.5" ry="6" transform="rotate(-25 8 9)" fill="#777" opacity=".5"/></svg>
<svg style="position:absolute;left:871.0px;top:257.0px" width="20" height="15" viewBox="0 0 20 15"><path d="M5 4q0-3.5 6-3 4 .5 5 2" stroke="#bbb" stroke-width=".8" fill="none"/><path d="M2 5h16l1.5 9h-19z" fill="#d4d4d4" stroke="#666" stroke-width=".6"/><path d="M3 7h14M2.5 9h15M2 11h16" stroke="#666" stroke-width=".8" stroke-dasharray="1.2 .6"/><path d="M5 12.5h10" stroke="#888" stroke-width=".8"/></svg>
<svg style="position:absolute;left:918.0px;top:254.5px" width="20" height="19" viewBox="0 0 20 19"><rect x="1" y="10" width="8.5" height="8.5" fill="#4aa0e0" stroke="#7cc0f0" stroke-width=".5"/><path d="M5 10V5h7" stroke="#ccc" stroke-width=".8" fill="none"/><rect x="12" y=".5" width="7" height="15" fill="#f0f0f0" stroke="#555" stroke-width=".7"/><path d="M13.5 3h4M13.5 5h4" stroke="#444" stroke-width=".8"/><circle cx="15.5" cy="11" r="1.8" fill="none" stroke="#444" stroke-width=".8"/></svg>
<svg style="position:absolute;left:966.0px;top:254.0px" width="22" height="20" viewBox="0 0 22 20"><defs><radialGradient id="sb" cx=".35" cy=".3"><stop offset="0" stop-color="#cfe8ff"/><stop offset=".5" stop-color="#4a9be0"/><stop offset="1" stop-color="#1a5aa8"/></radialGradient></defs><path d="M1 15q3-7 9-8l8-2q3 1 2 4l-7 3q-3 5-8 6-4 0-4-3z" fill="#d8d8d8" stroke="#666" stroke-width=".5"/><path d="M4 16q4-1 6-5" stroke="#555" stroke-width="1.5" fill="none"/><circle cx="13.5" cy="5" r="4.3" fill="url(#sb)"/></svg>
<svg style="position:absolute;left:876.5px;top:283.0px" width="9" height="22" viewBox="0 0 9 22"><circle cx="5" cy="2" r="1.5" fill="#2a4a9a"/><path d="M5 3.5l-1 6 1.5 5-1 6M4.5 5l-3 3M5 5l3 3.5M4 9.5l2 1" stroke="#b0413a" stroke-width="1.5" fill="none" stroke-linecap="round"/><path d="M5.5 14.5l-1 6" stroke="#d8c8a0" stroke-width="1.2"/></svg>
<svg style="position:absolute;left:918.0px;top:285.5px" width="20" height="17" viewBox="0 0 20 17"><rect x=".5" y=".5" width="7.5" height="15.5" fill="#f0f0f0" stroke="#555" stroke-width=".7"/><path d="M2 3h4.5M2 5h4.5" stroke="#444" stroke-width=".8"/><circle cx="4.2" cy="11" r="1.9" fill="none" stroke="#444" stroke-width=".8"/><path d="M8 8h9.5v3M12.5 8v3" stroke="#ccc" stroke-width=".8" fill="none"/><rect x="10.5" y="10.5" width="3.8" height="3.8" fill="#4aa0e0"/><rect x="15.5" y="10.5" width="3.8" height="3.8" fill="#4aa0e0"/></svg>
<svg style="position:absolute;left:970.0px;top:283.5px" width="14" height="17" viewBox="0 0 14 17"><circle cx="4.5" cy="4.5" r="3" fill="none" stroke="#f0f0f0" stroke-width="1.8"/><path d="M5 7.5l1.5 6" stroke="#e8e8e8" stroke-width="1.5"/><path d="M7 7l5.5 6h-2.5l1.2 3-1.5.7-1.3-3-1.8 1.7z" fill="#3aa0e8" stroke="#1a5a98" stroke-width=".4"/></svg>
</div>
<div id="un">
<div style="left:9px;top:337px;width:9px;height:8px;background:#222"></div>
<div style="left:11px;top:339px;width:5px;height:4px;background:#fff;clip-path:polygon(0 50%,50% 0,100% 50%,50% 100%)"></div>
<div style="left:21px;top:336px;font-size:7px;line-height:10px;color:#111;letter-spacing:-.05px">InstalacaoAnimataV1 - cena_teste4 - PC, Mac &amp; Linux Standalone - Unity 2019.3.15f1 <span style="position:static;letter-spacing:-.34px">Personal [PREVIEW PACKAGES IN USE]* &lt;DX11&gt;</span></div>
<div style="left:1066px;top:341px;width:6px;height:1px;background:#333"></div>
<div style="left:1092px;top:339px;width:6px;height:6px;border:1px solid #333;box-sizing:border-box;background:#fff"></div>
<div style="left:1094px;top:337px;width:6px;height:6px;border:1px solid #333;border-left:none;border-bottom:none;box-sizing:border-box"></div>
<svg style="position:absolute;left:1118px;top:337px" width="9" height="9" viewBox="0 0 9 9"><path d="M1 1l7 7M8 1L1 8" stroke="#222" stroke-width="1"/></svg>
<div style="left:75px;top:348px;width:46px;height:12px;background:#cce4f7;border:1px solid #9ccdf5;box-sizing:border-box"></div>
<div style="left:12px;top:349px;font-size:7.2px;line-height:10px;color:#111">File</div>
<div style="left:30px;top:349px;font-size:7.2px;line-height:10px;color:#111">Edit</div>
<div style="left:50px;top:349px;font-size:7.2px;line-height:10px;color:#111">Assets</div>
<div style="left:78px;top:349px;font-size:7.2px;line-height:10px;color:#111">GameObject</div>
<div style="left:125px;top:349px;font-size:7.2px;line-height:10px;color:#111">Component</div>
<div style="left:171px;top:349px;font-size:7.2px;line-height:10px;color:#111">Tutorial</div>
<div style="left:203px;top:349px;font-size:7.2px;line-height:10px;color:#111">Window</div>
<div style="left:236px;top:349px;font-size:7.2px;line-height:10px;color:#111">Help</div>
<div style="left:8px;top:360px;width:1129px;height:384px;background:#c4c4c4"></div>
<div style="left:8px;top:360px;width:1129px;height:17px;background:#a0a0a0"></div>
<div style="left:8px;top:377px;width:1129px;height:12px;background:#ababab"></div>
<div style="left:13px;top:363px;width:17px;height:11px;background:#d0d0d0;border-radius:2px 0 0 2px"></div>
<div style="left:18px;top:367px;width:7px;height:5px;background:#444;border-radius:1px 1px 3px 3px"></div>
<div style="left:18px;top:365px;width:7px;height:3px;background:repeating-linear-gradient(90deg,#444 0 1px,transparent 1px 2px)"></div>
<div style="left:31.5px;top:363px;width:18px;height:11px;background:#808080;font-size:9px;line-height:11px;text-align:center;color:#eee">&#10021;</div>
<div style="left:50px;top:363px;width:17px;height:11px;background:#d0d0d0;font-size:9px;line-height:11px;text-align:center;color:#555">&#8635;</div>
<div style="left:68px;top:363px;width:170px;height:11px;background:#d0d0d0"></div>
<div style="left:532px;top:363px;width:17px;height:12px;background:#d0d0d0;font-size:7px;line-height:12px;text-align:center;color:#333">&#9654;</div>
<div style="left:550px;top:363px;width:18px;height:12px;background:#d0d0d0;font-size:7px;line-height:12px;text-align:center;color:#333;font-weight:bold">&#10074;&#10074;</div>
<div style="left:569px;top:363px;width:18px;height:12px;background:#b4b4b4;font-size:7px;line-height:12px;text-align:center;color:#888">&#9654;&#10074;</div>
<div style="left:908px;top:363px;width:45px;height:11px;background:#d8d8d8;border-radius:2px;font-size:7.5px;line-height:11px;color:#222">&nbsp;&#10004; Collab<span style="right:4px;top:4px;width:0;height:0;border-left:2.5px solid transparent;border-right:2.5px solid transparent;border-top:3.5px solid #333"></span></div>
<div style="left:959px;top:363px;width:18px;height:11px;background:#d8d8d8;border-radius:2px;font-size:7.5px;line-height:11px;color:#222">&nbsp;</div>
<div style="left:983px;top:363px;width:45px;height:11px;background:#d8d8d8;border-radius:2px;font-size:7.5px;line-height:11px;color:#222">&nbsp;Account<span style="right:4px;top:4px;width:0;height:0;border-left:2.5px solid transparent;border-right:2.5px solid transparent;border-top:3.5px solid #333"></span></div>
<div style="left:1034px;top:363px;width:46px;height:11px;background:#d8d8d8;border-radius:2px;font-size:7.5px;line-height:11px;color:#222">&nbsp;Layers<span style="right:4px;top:4px;width:0;height:0;border-left:2.5px solid transparent;border-right:2.5px solid transparent;border-top:3.5px solid #333"></span></div>
<div style="left:1086px;top:363px;width:46px;height:11px;background:#d8d8d8;border-radius:2px;font-size:7.5px;line-height:11px;color:#222">&nbsp;Layout<span style="right:4px;top:4px;width:0;height:0;border-left:2.5px solid transparent;border-right:2.5px solid transparent;border-top:3.5px solid #333"></span></div>
<div style="left:964px;top:366px;width:8px;height:4px;background:#444;border-radius:3px 3px 1px 1px"></div>
<div style="left:9px;top:378px;width:43px;height:11px;background:#c4c4c4;border-radius:2px 2px 0 0;font-size:7.5px;line-height:11px;color:#4a4a4a">&nbsp;&#9783; Scene</div>
<div style="left:54px;top:378px;width:22px;height:11px;background:#b4b4b4;border-radius:2px 2px 0 0;font-size:7.5px;line-height:11px;color:#333;overflow:hidden"><span style="left:4px;top:5px;width:5px;height:4px;background:#444"></span><span style="left:5px;top:2px;width:3px;height:4px;border:1px solid #444;border-radius:2px;box-sizing:border-box"></span><span style="left:12px">As</span></div>
<div style="left:475px;top:381px;width:1.3px;height:7px;background:repeating-linear-gradient(180deg,#444 0 1.4px,transparent 1.4px 2.8px)"></div>
<div style="left:8px;top:389px;width:477px;height:12px;background:#cacaca"></div>
<div style="left:10px;top:390px;font-size:7.5px;color:#222">Shaded</div>
<div style="left:71px;top:393px;width:0;height:0;border-left:2.5px solid transparent;border-right:2.5px solid transparent;border-top:3px solid #333"></div>
<div style="left:282px;top:390px;width:1px;height:11px;background:#aaa"></div>
<div style="left:298px;top:390px;width:1px;height:11px;background:#aaa"></div>
<div style="left:358px;top:390px;width:1px;height:11px;background:#aaa"></div>
<div style="left:286px;top:394.5px;width:9px;height:1.3px;background:#333;transform:rotate(40deg)"></div>
<div style="left:286px;top:394.5px;width:9px;height:1.3px;background:#333;transform:rotate(-40deg)"></div>
<div style="left:301px;top:392px;width:7px;height:5px;background:#444"></div>
<div style="left:308px;top:393px;width:2px;height:3px;background:#444"></div>
<div style="left:311px;top:393px;width:0;height:0;border-left:2.5px solid transparent;border-right:2.5px solid transparent;border-top:3px solid #333"></div>
<div style="left:320px;top:390px;font-size:7.5px;color:#222">Gizmos</div>
<div style="left:348px;top:391px;width:1px;height:9px;background:#999"></div>
<div style="left:351px;top:393px;width:0;height:0;border-left:2.5px solid transparent;border-right:2.5px solid transparent;border-top:3px solid #333"></div>
<div style="left:363px;top:391px;width:119px;height:8px;background:#f2f2f2;border-radius:2px;font-size:5.5px;line-height:8px;color:#999">&nbsp;&#9740; All</div>
<div style="left:8px;top:401px;width:477px;height:343px;background:#050302"></div>
<div style="left:8px;top:401px;width:477px;height:343px;background:radial-gradient(ellipse 250px 170px at 0px 159px,#3a190b 0,#241007 30%,#130804 62%,rgba(7,4,3,0) 100%)"></div>
<div style="left:274px;top:578px;width:16px;height:20px;background:#2a150a;transform:skewY(-3deg)"></div>
<div style="left:259px;top:619px;width:25px;height:15px;background:#2a150a"></div>
<div style="left:237px;top:595px;width:4px;height:23px;background:#24110a"></div>
<div style="left:382px;top:594px;width:30px;height:29px;background:#2a1409;transform:skewX(-8deg)"></div>
<div style="left:60px;top:465px;width:22px;height:8px;background:#2a1309;transform:rotate(-35deg)"></div>
<div style="left:300px;top:640px;width:115px;height:2px;background:#0e0705"></div>
<div style="left:236px;top:652px;width:48px;height:22px;background:linear-gradient(#1f0f07,#120804);border-radius:2px"></div>
<div style="left:236px;top:674px;width:40px;height:40px;background:#0d0604"></div>
<div style="left:293px;top:682px;width:28px;height:36px;background:#0c0604"></div>
<div style="left:378px;top:690px;width:42px;height:36px;background:#0b0504"></div>
<svg style="position:absolute;left:436px;top:411px" width="44" height="40" viewBox="0 0 44 40"><path d="M5 17.5q-1.5 3.5 0 7L15 21z" fill="#c8c8c8"/><path d="M21 20l5.5-6 2.5 3z" fill="#a8a8a8"/><path d="M15.5 35.5q3.5 1.5 7 0L19 25z" fill="#c8c8c8"/><path d="M15 17h8v8h-8z" fill="#f6f6f6"/><path d="M23 17l2-1.5v7.5l-2 2z" fill="#ccc"/><path d="M14 2.5h10L19 14z" fill="#2fc82f"/><path d="M36.5 16.5v9L25 21.5z" fill="#1f33e8"/><circle cx="11" cy="27" r="5" fill="#ee1010"/></svg>
<div style="left:452px;top:405px;font-size:7.5px;font-weight:bold;color:#f0f0f0">y</div>
<div style="left:474px;top:428px;font-size:7.5px;font-weight:bold;color:#f0f0f0">z</div>
<div style="left:437px;top:437px;font-size:7.5px;font-weight:bold;color:#f0f0f0">x</div>
<div style="left:473px;top:411px;width:5px;height:4px;background:#ddd;border-radius:1px"></div>
<div style="left:474px;top:408px;width:3px;height:4px;border:1px solid #ddd;border-radius:2px;box-sizing:border-box"></div>
<div style="left:441px;top:455px;font-size:7px;color:#bbb">&#8828; Persp</div>
<div style="left:485px;top:377px;width:1px;height:367px;background:#8a8a8a"></div>
<div style="left:486px;top:377px;width:57px;height:12px;background:#c4c4c4;border-top:1px solid #3a79bb;box-sizing:border-box;font-size:7.5px;line-height:11px;color:#222">&nbsp;&nbsp;&#9776; Hierarchy</div>
<div style="left:762px;top:382px;width:5px;height:4px;border:1px solid #777;border-radius:1px;box-sizing:border-box"></div>
<div style="left:763px;top:380px;width:3px;height:3px;border:1px solid #777;border-bottom:none;border-radius:2px 2px 0 0;box-sizing:border-box"></div>
<div style="left:773px;top:381px;width:1.3px;height:7px;background:repeating-linear-gradient(180deg,#444 0 1.4px,transparent 1.4px 2.8px)"></div>
<div style="left:486px;top:389px;width:293px;height:13px;background:#cacaca"></div>
<div style="left:490px;top:394px;width:8px;height:1.6px;background:#333"></div>
<div style="left:493.2px;top:391px;width:1.6px;height:8px;background:#333"></div>
<div style="left:500px;top:394px;width:0;height:0;border-left:2.5px solid transparent;border-right:2.5px solid transparent;border-top:3px solid #333"></div>
<div style="left:598px;top:391px;width:180px;height:8px;background:#f2f2f2;border-radius:2px;font-size:5.5px;line-height:8px;color:#999">&nbsp;&#9740; All</div>
<div style="left:486px;top:402px;width:293px;height:9px;background:#ebebeb"></div>
<div style="left:486px;top:411px;width:19px;height:266px;background:#b6b6b6"></div>
<div style="left:488px;top:404px;width:6px;height:4px;border:1px solid #888;border-radius:3px;box-sizing:border-box"></div>
<div style="left:497px;top:404px;width:6px;height:4px;border:1px solid #888;border-radius:3px;box-sizing:border-box"></div>
<div style="left:497px;top:403px;width:7px;height:1px;background:#888;transform:rotate(40deg);transform-origin:0 0"></div>
<div style="left:506px;top:405px;width:0;height:0;border-left:3px solid transparent;border-right:3px solid transparent;border-top:4.5px solid #777"></div>
<svg style="position:absolute;left:513px;top:402px" width="9" height="9" viewBox="0 0 9 9"><path d="M4.5 .8L8 2.7v3.6L4.5 8.2 1 6.3V2.7z" fill="none" stroke="#222" stroke-width="1"/><path d="M1.5 3l3 1.7 3-1.7M4.5 4.7V8" stroke="#222" stroke-width=".8" fill="none"/></svg>
<div style="left:524px;top:401.5px;font-size:7.5px;line-height:10px;color:#111;font-weight:bold">cena_teste4*</div>
<div style="left:774px;top:403.5px;width:1.3px;height:7px;background:repeating-linear-gradient(180deg,#444 0 1.4px,transparent 1.4px 2.8px)"></div>
<div style="left:532px;top:410.7px;font-size:7.3px;line-height:10px;color:#8e8e8e">Main Camera</div>
<svg style="position:absolute;left:521.5px;top:411.2px" width="9" height="9" viewBox="0 0 9 9"><circle cx="4.5" cy="4.5" r="3.5" fill="none" stroke="#999" stroke-width=".7"/><path d="M2 2.8l2.5 1.7 2.5-1.7M4.5 4.5V8" stroke="#999" stroke-width=".6" fill="none"/></svg>
<div style="left:532px;top:419.7px;font-size:7.3px;line-height:10px;color:#1f5fbf">cenario</div>
<svg style="position:absolute;left:521.5px;top:420.2px" width="9" height="9" viewBox="0 0 9 9"><path d="M4.5 .5L8.3 2.5 4.5 4.5.7 2.5z" fill="#7fc0ff"/><path d="M.7 2.5L4.5 4.5v4L.7 6.5z" fill="#3b8ef0"/><path d="M8.3 2.5L4.5 4.5v4l3.8-2z" fill="#1a5fc0"/><path d="M5.2 5v2.5l1-.5V4.5z" fill="#fff" opacity=".8"/></svg>
<div style="left:514px;top:420.7px;font-size:5px;line-height:8px;color:#555">&#9654;</div>
<div style="left:532px;top:429px;font-size:7.3px;line-height:10px;color:#8e8e8e">LuzExterior</div>
<svg style="position:absolute;left:521.5px;top:429.5px" width="9" height="9" viewBox="0 0 9 9"><circle cx="4.5" cy="4.5" r="3.5" fill="none" stroke="#999" stroke-width=".7"/><path d="M2 2.8l2.5 1.7 2.5-1.7M4.5 4.5V8" stroke="#999" stroke-width=".6" fill="none"/></svg>
<div style="left:532px;top:438.5px;font-size:7.3px;line-height:10px;color:#111">Sky and Fog Volume</div>
<svg style="position:absolute;left:521.5px;top:439.0px" width="9" height="9" viewBox="0 0 9 9"><circle cx="4.5" cy="4.5" r="3.5" fill="none" stroke="#222" stroke-width=".7"/><path d="M2 2.8l2.5 1.7 2.5-1.7M4.5 4.5V8" stroke="#222" stroke-width=".6" fill="none"/></svg>
<div style="left:532px;top:448px;font-size:7.3px;line-height:10px;color:#111">Post Process Volume</div>
<svg style="position:absolute;left:521.5px;top:448.5px" width="9" height="9" viewBox="0 0 9 9"><circle cx="4.5" cy="4.5" r="3.5" fill="none" stroke="#222" stroke-width=".7"/><path d="M2 2.8l2.5 1.7 2.5-1.7M4.5 4.5V8" stroke="#222" stroke-width=".6" fill="none"/></svg>
<div style="left:532px;top:457px;font-size:7.3px;line-height:10px;color:#111">Light Probe Group</div>
<svg style="position:absolute;left:521.5px;top:457.5px" width="9" height="9" viewBox="0 0 9 9"><circle cx="4.5" cy="4.5" r="3.5" fill="none" stroke="#222" stroke-width=".7"/><path d="M2 2.8l2.5 1.7 2.5-1.7M4.5 4.5V8" stroke="#222" stroke-width=".6" fill="none"/></svg>
<div style="left:532px;top:467px;font-size:7.3px;line-height:10px;color:#8e8e8e">Example Assets</div>
<svg style="position:absolute;left:521.5px;top:467.5px" width="9" height="9" viewBox="0 0 9 9"><circle cx="4.5" cy="4.5" r="3.5" fill="none" stroke="#999" stroke-width=".7"/><path d="M2 2.8l2.5 1.7 2.5-1.7M4.5 4.5V8" stroke="#999" stroke-width=".6" fill="none"/></svg>
<div style="left:514px;top:468px;font-size:5px;line-height:8px;color:#555">&#9654;</div>
<div style="left:532px;top:476.5px;font-size:7.3px;line-height:10px;color:#4a7ad0">PersonagemAlexandre</div>
<svg style="position:absolute;left:521.5px;top:477.0px" width="9" height="9" viewBox="0 0 9 9"><path d="M4.5 .5L8.3 2.5 4.5 4.5.7 2.5z" fill="#c0dcff"/><path d="M.7 2.5L4.5 4.5v4L.7 6.5z" fill="#8ab4f0"/><path d="M8.3 2.5L4.5 4.5v4l3.8-2z" fill="#6a94d8"/><path d="M5.2 5v2.5l1-.5V4.5z" fill="#fff" opacity=".8"/></svg>
<div style="left:514px;top:477.5px;font-size:5px;line-height:8px;color:#555">&#9654;</div>
<div style="left:532px;top:486px;font-size:7.3px;line-height:10px;color:#8e8e8e">Point Light</div>
<svg style="position:absolute;left:521.5px;top:486.5px" width="9" height="9" viewBox="0 0 9 9"><circle cx="4.5" cy="4.5" r="3.5" fill="none" stroke="#999" stroke-width=".7"/><path d="M2 2.8l2.5 1.7 2.5-1.7M4.5 4.5V8" stroke="#999" stroke-width=".6" fill="none"/></svg>
<div style="left:532px;top:495px;font-size:7.3px;line-height:10px;color:#111">Spot Light (2)</div>
<svg style="position:absolute;left:521.5px;top:495.5px" width="9" height="9" viewBox="0 0 9 9"><circle cx="4.5" cy="4.5" r="3.5" fill="none" stroke="#222" stroke-width=".7"/><path d="M2 2.8l2.5 1.7 2.5-1.7M4.5 4.5V8" stroke="#222" stroke-width=".6" fill="none"/></svg>
<div style="left:532px;top:505px;font-size:7.3px;line-height:10px;color:#8e8e8e">Spot Light Lampada (2)</div>
<svg style="position:absolute;left:521.5px;top:505.5px" width="9" height="9" viewBox="0 0 9 9"><circle cx="4.5" cy="4.5" r="3.5" fill="none" stroke="#999" stroke-width=".7"/><path d="M2 2.8l2.5 1.7 2.5-1.7M4.5 4.5V8" stroke="#999" stroke-width=".6" fill="none"/></svg>
<div style="left:532px;top:514px;font-size:7.3px;line-height:10px;color:#8e8e8e">Spot Light Lampada (3)</div>
<svg style="position:absolute;left:521.5px;top:514.5px" width="9" height="9" viewBox="0 0 9 9"><circle cx="4.5" cy="4.5" r="3.5" fill="none" stroke="#999" stroke-width=".7"/><path d="M2 2.8l2.5 1.7 2.5-1.7M4.5 4.5V8" stroke="#999" stroke-width=".6" fill="none"/></svg>
<div style="left:532px;top:524px;font-size:7.3px;line-height:10px;color:#8e8e8e">Spot Light Lampada (4)</div>
<svg style="position:absolute;left:521.5px;top:524.5px" width="9" height="9" viewBox="0 0 9 9"><circle cx="4.5" cy="4.5" r="3.5" fill="none" stroke="#999" stroke-width=".7"/><path d="M2 2.8l2.5 1.7 2.5-1.7M4.5 4.5V8" stroke="#999" stroke-width=".6" fill="none"/></svg>
<div style="left:532px;top:533px;font-size:7.3px;line-height:10px;color:#8e8e8e">Spot Light Lampada (5)</div>
<svg style="position:absolute;left:521.5px;top:533.5px" width="9" height="9" viewBox="0 0 9 9"><circle cx="4.5" cy="4.5" r="3.5" fill="none" stroke="#999" stroke-width=".7"/><path d="M2 2.8l2.5 1.7 2.5-1.7M4.5 4.5V8" stroke="#999" stroke-width=".6" fill="none"/></svg>
<div style="left:532px;top:542.5px;font-size:7.3px;line-height:10px;color:#8e8e8e">Point Light (2)</div>
<svg style="position:absolute;left:521.5px;top:543.0px" width="9" height="9" viewBox="0 0 9 9"><circle cx="4.5" cy="4.5" r="3.5" fill="none" stroke="#999" stroke-width=".7"/><path d="M2 2.8l2.5 1.7 2.5-1.7M4.5 4.5V8" stroke="#999" stroke-width=".6" fill="none"/></svg>
<div style="left:532px;top:552px;font-size:7.3px;line-height:10px;color:#8e8e8e">Point Light (3)</div>
<svg style="position:absolute;left:521.5px;top:552.5px" width="9" height="9" viewBox="0 0 9 9"><circle cx="4.5" cy="4.5" r="3.5" fill="none" stroke="#999" stroke-width=".7"/><path d="M2 2.8l2.5 1.7 2.5-1.7M4.5 4.5V8" stroke="#999" stroke-width=".6" fill="none"/></svg>
<div style="left:532px;top:561px;font-size:7.3px;line-height:10px;color:#111">apagarEstaLuz</div>
<svg style="position:absolute;left:521.5px;top:561.5px" width="9" height="9" viewBox="0 0 9 9"><circle cx="4.5" cy="4.5" r="3.5" fill="none" stroke="#222" stroke-width=".7"/><path d="M2 2.8l2.5 1.7 2.5-1.7M4.5 4.5V8" stroke="#222" stroke-width=".6" fill="none"/></svg>
<div style="left:532px;top:570px;font-size:7.3px;line-height:10px;color:#111">apagarEstaLuz (1)</div>
<svg style="position:absolute;left:521.5px;top:570.5px" width="9" height="9" viewBox="0 0 9 9"><circle cx="4.5" cy="4.5" r="3.5" fill="none" stroke="#222" stroke-width=".7"/><path d="M2 2.8l2.5 1.7 2.5-1.7M4.5 4.5V8" stroke="#222" stroke-width=".6" fill="none"/></svg>
<div style="left:532px;top:579.7px;font-size:7.3px;line-height:10px;color:#111">Point Light LuzProjetor1</div>
<svg style="position:absolute;left:521.5px;top:580.2px" width="9" height="9" viewBox="0 0 9 9"><circle cx="4.5" cy="4.5" r="3.5" fill="none" stroke="#222" stroke-width=".7"/><path d="M2 2.8l2.5 1.7 2.5-1.7M4.5 4.5V8" stroke="#222" stroke-width=".6" fill="none"/></svg>
<div style="left:532px;top:589px;font-size:7.3px;line-height:10px;color:#111">Spot Light LuzProjetor2</div>
<svg style="position:absolute;left:521.5px;top:589.5px" width="9" height="9" viewBox="0 0 9 9"><circle cx="4.5" cy="4.5" r="3.5" fill="none" stroke="#222" stroke-width=".7"/><path d="M2 2.8l2.5 1.7 2.5-1.7M4.5 4.5V8" stroke="#222" stroke-width=".6" fill="none"/></svg>
<div style="left:532px;top:598.3px;font-size:7.3px;line-height:10px;color:#111">videoprojecao</div>
<svg style="position:absolute;left:521.5px;top:598.8px" width="9" height="9" viewBox="0 0 9 9"><circle cx="4.5" cy="4.5" r="3.5" fill="none" stroke="#222" stroke-width=".7"/><path d="M2 2.8l2.5 1.7 2.5-1.7M4.5 4.5V8" stroke="#222" stroke-width=".6" fill="none"/></svg>
<div style="left:532px;top:607.7px;font-size:7.3px;line-height:10px;color:#111">Camera1</div>
<svg style="position:absolute;left:521.5px;top:608.2px" width="9" height="9" viewBox="0 0 9 9"><circle cx="4.5" cy="4.5" r="3.5" fill="none" stroke="#222" stroke-width=".7"/><path d="M2 2.8l2.5 1.7 2.5-1.7M4.5 4.5V8" stroke="#222" stroke-width=".6" fill="none"/></svg>
<div style="left:532px;top:617.3px;font-size:7.3px;line-height:10px;color:#111">Camera2</div>
<svg style="position:absolute;left:521.5px;top:617.8px" width="9" height="9" viewBox="0 0 9 9"><circle cx="4.5" cy="4.5" r="3.5" fill="none" stroke="#222" stroke-width=".7"/><path d="M2 2.8l2.5 1.7 2.5-1.7M4.5 4.5V8" stroke="#222" stroke-width=".6" fill="none"/></svg>
<div style="left:532px;top:626.7px;font-size:7.3px;line-height:10px;color:#111">Camera3</div>
<svg style="position:absolute;left:521.5px;top:627.2px" width="9" height="9" viewBox="0 0 9 9"><circle cx="4.5" cy="4.5" r="3.5" fill="none" stroke="#222" stroke-width=".7"/><path d="M2 2.8l2.5 1.7 2.5-1.7M4.5 4.5V8" stroke="#222" stroke-width=".6" fill="none"/></svg>
<div style="left:532px;top:636px;font-size:7.3px;line-height:10px;color:#111">Camera4</div>
<svg style="position:absolute;left:521.5px;top:636.5px" width="9" height="9" viewBox="0 0 9 9"><circle cx="4.5" cy="4.5" r="3.5" fill="none" stroke="#222" stroke-width=".7"/><path d="M2 2.8l2.5 1.7 2.5-1.7M4.5 4.5V8" stroke="#222" stroke-width=".6" fill="none"/></svg>
<div style="left:532px;top:645.3px;font-size:7.3px;line-height:10px;color:#111">MyCameraSwitcher</div>
<svg style="position:absolute;left:521.5px;top:645.8px" width="9" height="9" viewBox="0 0 9 9"><circle cx="4.5" cy="4.5" r="3.5" fill="none" stroke="#222" stroke-width=".7"/><path d="M2 2.8l2.5 1.7 2.5-1.7M4.5 4.5V8" stroke="#222" stroke-width=".6" fill="none"/></svg>
<div style="left:496px;top:419.7px;font-size:8px;line-height:10px;color:#666">&#10005;</div>
<div style="left:496px;top:467px;font-size:8px;line-height:10px;color:#666">&#10005;</div>
<div style="left:488px;top:479px;width:5px;height:4px;border:1px solid #777;border-radius:2px;box-sizing:border-box"></div>
<div style="left:486px;top:677px;width:293px;height:1px;background:#8c8c8c"></div>
<div style="left:486px;top:678px;width:293px;height:12px;background:#ababab"></div>
<div style="left:486px;top:679px;width:47px;height:11px;background:#c4c4c4;border-radius:2px 2px 0 0"></div>
<div style="left:491px;top:682px;width:7px;height:5px;background:#444;border-radius:1px"></div>
<div style="left:491px;top:681px;width:3px;height:2px;background:#444"></div>
<div style="left:500px;top:680px;font-size:7.5px;line-height:10px;color:#222">Project</div>
<div style="left:762px;top:684px;width:5px;height:4px;border:1px solid #777;border-radius:1px;box-sizing:border-box"></div>
<div style="left:763px;top:682px;width:3px;height:3px;border:1px solid #777;border-bottom:none;border-radius:2px 2px 0 0;box-sizing:border-box"></div>
<div style="left:773px;top:683px;width:1.3px;height:7px;background:repeating-linear-gradient(180deg,#444 0 1.4px,transparent 1.4px 2.8px)"></div>
<div style="left:486px;top:690px;width:293px;height:12px;background:#cacaca"></div>
<div style="left:490px;top:695px;width:8px;height:1.6px;background:#333"></div>
<div style="left:493.2px;top:692px;width:1.6px;height:8px;background:#333"></div>
<div style="left:500px;top:695px;width:0;height:0;border-left:2.5px solid transparent;border-right:2.5px solid transparent;border-top:3px solid #333"></div>
<div style="left:533px;top:692px;width:176px;height:8px;background:#efefef;border-radius:3px"></div>
<div style="left:536px;top:693px;font-size:5px;line-height:7px;color:#777">&#9740;</div>
<div style="left:713px;top:691px;width:14px;height:11px;background:#cecece;border-left:1px solid #a8a8a8;box-sizing:border-box"></div>
<div style="left:728px;top:691px;width:14px;height:11px;background:#cecece;border-left:1px solid #a8a8a8;box-sizing:border-box"></div>
<div style="left:743px;top:691px;width:14px;height:11px;background:#cecece;border-left:1px solid #a8a8a8;box-sizing:border-box"></div>
<div style="left:717px;top:694px;width:5px;height:5px;background:#444;border-radius:2px"></div>
<div style="left:733px;top:694px;width:5px;height:4px;background:#444;transform:rotate(-30deg)"></div>
<div style="left:746px;top:691px;font-size:8px;line-height:11px;color:#888">&#9733;</div>
<div style="left:758px;top:691px;width:21px;height:11px;background:#e2e2e2;font-size:7px;line-height:11px;color:#222">&nbsp;&#8960;17</div>
<div style="left:551px;top:702px;width:1px;height:42px;background:#9a9a9a"></div>
<div style="left:552px;top:702px;width:227px;height:11px;background:#d2d2d2"></div>
<div style="left:488px;top:705px;width:0;height:0;border-left:3px solid transparent;border-right:3px solid transparent;border-top:4.5px solid #777"></div>
<div style="left:497px;top:702px;font-size:8px;line-height:10px;color:#e8a000">&#9733;</div>
<div style="left:507px;top:702px;font-size:7.5px;line-height:10px;color:#111;font-weight:bold">Favorites</div>
<div style="left:505px;top:712.5px;width:5px;height:5px;border:1px solid #777;border-radius:3px;box-sizing:border-box"></div>
<div style="left:509px;top:716.5px;width:3px;height:1px;background:#777;transform:rotate(45deg)"></div>
<div style="left:514px;top:711.5px;width:37px;font-size:7.5px;line-height:10px;color:#111;overflow:hidden">All Materia</div>
<div style="left:505px;top:721.9px;width:5px;height:5px;border:1px solid #777;border-radius:3px;box-sizing:border-box"></div>
<div style="left:509px;top:725.9px;width:3px;height:1px;background:#777;transform:rotate(45deg)"></div>
<div style="left:514px;top:720.9px;width:37px;font-size:7.5px;line-height:10px;color:#111;overflow:hidden">All Models</div>
<div style="left:505px;top:731.3px;width:5px;height:5px;border:1px solid #777;border-radius:3px;box-sizing:border-box"></div>
<div style="left:509px;top:735.3px;width:3px;height:1px;background:#777;transform:rotate(45deg)"></div>
<div style="left:514px;top:730.3px;width:37px;font-size:7.5px;line-height:10px;color:#111;overflow:hidden">All Prefabs</div>
<div style="left:554px;top:703px;font-size:7.5px;line-height:10px;color:#111;font-weight:bold">Assets</div>
<div style="left:562px;top:717.0px;width:7px;height:5px;background:#4a4a4a;border-radius:1px"></div>
<div style="left:562px;top:716.0px;width:3px;height:2px;background:#4a4a4a"></div>
<div style="left:571px;top:715.0px;font-size:7.5px;line-height:10px;color:#111">ExampleAssets</div>
<div style="left:562px;top:726.4px;width:7px;height:5px;background:#4a4a4a;border-radius:1px"></div>
<div style="left:562px;top:725.4px;width:3px;height:2px;background:#4a4a4a"></div>
<div style="left:571px;top:724.4px;font-size:7.5px;line-height:10px;color:#111">HDRPDefaultResources</div>
<div style="left:562px;top:735.8px;width:7px;height:5px;background:#4a4a4a;border-radius:1px"></div>
<div style="left:562px;top:734.8px;width:3px;height:2px;background:#4a4a4a"></div>
<div style="left:571px;top:733.8px;font-size:7.5px;line-height:10px;color:#111">IMPORTED_MAYA</div>
<div style="left:780px;top:377px;width:1.5px;height:367px;background:#838383"></div>
<div style="left:781px;top:377px;width:356px;height:12px;background:#ababab"></div>
<div style="left:782px;top:378px;width:54px;height:11px;background:#c4c4c4;border-radius:2px 2px 0 0"></div>
<div style="left:787px;top:381px;width:5px;height:5px;background:#333;border-radius:3px"></div>
<div style="left:795px;top:378px;font-size:7.5px;line-height:11px;color:#222">Inspector</div>
<div style="left:1117px;top:382px;width:5px;height:4px;border:1px solid #777;border-radius:1px;box-sizing:border-box"></div>
<div style="left:1118px;top:380px;width:3px;height:3px;border:1px solid #777;border-bottom:none;border-radius:2px 2px 0 0;box-sizing:border-box"></div>
<div style="left:1128px;top:381px;width:1.3px;height:7px;background:repeating-linear-gradient(180deg,#444 0 1.4px,transparent 1.4px 2.8px)"></div>
<div style="left:75px;top:360px;width:160px;height:313px;background:#f2f2f2;box-shadow:1px 1px 2px rgba(0,0,0,.45)"></div>
<div style="left:76px;top:490px;width:158px;height:13px;background:#84c6f8"></div>
<div style="left:95px;top:363.2px;font-size:7px;line-height:10px;color:#111;letter-spacing:-.05px">Create Empty</div>
<div style="left:150px;top:363.2px;width:73px;font-size:7px;line-height:10px;color:#111;text-align:right;letter-spacing:-.05px">Ctrl+Shift+N</div>
<div style="left:95px;top:376.2px;font-size:7px;line-height:10px;color:#111;letter-spacing:-.05px">Create Empty Child</div>
<div style="left:150px;top:376.2px;width:73px;font-size:7px;line-height:10px;color:#111;text-align:right;letter-spacing:-.05px">Alt+Shift+N</div>
<div style="left:95px;top:388.5px;font-size:7px;line-height:10px;color:#111;letter-spacing:-.05px">3D Object</div>
<div style="left:226px;top:388.5px;font-size:7px;line-height:10px;color:#444">&#8250;</div>
<div style="left:95px;top:401.6px;font-size:7px;line-height:10px;color:#111;letter-spacing:-.05px">2D Object</div>
<div style="left:226px;top:401.6px;font-size:7px;line-height:10px;color:#444">&#8250;</div>
<div style="left:95px;top:414.6px;font-size:7px;line-height:10px;color:#111;letter-spacing:-.05px">Effects</div>
<div style="left:226px;top:414.6px;font-size:7px;line-height:10px;color:#444">&#8250;</div>
<div style="left:95px;top:427.6px;font-size:7px;line-height:10px;color:#111;letter-spacing:-.05px">Light</div>
<div style="left:226px;top:427.6px;font-size:7px;line-height:10px;color:#444">&#8250;</div>
<div style="left:95px;top:440.6px;font-size:7px;line-height:10px;color:#111;letter-spacing:-.05px">Audio</div>
<div style="left:226px;top:440.6px;font-size:7px;line-height:10px;color:#444">&#8250;</div>
<div style="left:95px;top:453.6px;font-size:7px;line-height:10px;color:#111;letter-spacing:-.05px">Video</div>
<div style="left:226px;top:453.6px;font-size:7px;line-height:10px;color:#444">&#8250;</div>
<div style="left:95px;top:466.6px;font-size:7px;line-height:10px;color:#111;letter-spacing:-.05px">UI</div>
<div style="left:226px;top:466.6px;font-size:7px;line-height:10px;color:#444">&#8250;</div>
<div style="left:95px;top:479px;font-size:7px;line-height:10px;color:#111;letter-spacing:-.05px">Volume</div>
<div style="left:226px;top:479px;font-size:7px;line-height:10px;color:#444">&#8250;</div>
<div style="left:95px;top:492px;font-size:7px;line-height:10px;color:#111;letter-spacing:-.05px">MeshSync</div>
<div style="left:226px;top:492px;font-size:7px;line-height:10px;color:#444">&#8250;</div>
<div style="left:95px;top:505px;font-size:7px;line-height:10px;color:#111;letter-spacing:-.05px">Visual Effects</div>
<div style="left:226px;top:505px;font-size:7px;line-height:10px;color:#444">&#8250;</div>
<div style="left:95px;top:518px;font-size:7px;line-height:10px;color:#111;letter-spacing:-.05px">Rendering</div>
<div style="left:226px;top:518px;font-size:7px;line-height:10px;color:#444">&#8250;</div>
<div style="left:95px;top:531px;font-size:7px;line-height:10px;color:#111;letter-spacing:-.05px">Camera</div>
<div style="left:95px;top:548px;font-size:7px;line-height:10px;color:#777;letter-spacing:-.05px">Center On Children</div>
<div style="left:95px;top:565px;font-size:7px;line-height:10px;color:#777;letter-spacing:-.05px">Make Parent</div>
<div style="left:95px;top:578px;font-size:7px;line-height:10px;color:#777;letter-spacing:-.05px">Clear Parent</div>
<div style="left:95px;top:595px;font-size:7px;line-height:10px;color:#777;letter-spacing:-.05px">Set as first sibling</div>
<div style="left:150px;top:595px;width:73px;font-size:7px;line-height:10px;color:#777;text-align:right;letter-spacing:-.05px">Ctrl+=</div>
<div style="left:95px;top:608px;font-size:7px;line-height:10px;color:#777;letter-spacing:-.05px">Set as last sibling</div>
<div style="left:150px;top:608px;width:73px;font-size:7px;line-height:10px;color:#777;text-align:right;letter-spacing:-.05px">Ctrl+-</div>
<div style="left:95px;top:621px;font-size:7px;line-height:10px;color:#777;letter-spacing:-.05px">Move To View</div>
<div style="left:150px;top:621px;width:73px;font-size:7px;line-height:10px;color:#777;text-align:right;letter-spacing:-.05px">Ctrl+Alt+F</div>
<div style="left:95px;top:634px;font-size:7px;line-height:10px;color:#777;letter-spacing:-.05px">Align With View</div>
<div style="left:150px;top:634px;width:73px;font-size:7px;line-height:10px;color:#777;text-align:right;letter-spacing:-.05px">Ctrl+Shift+F</div>
<div style="left:95px;top:647px;font-size:7px;line-height:10px;color:#777;letter-spacing:-.05px">Align View to Selected</div>
<div style="left:95px;top:660px;font-size:7px;line-height:10px;color:#777;letter-spacing:-.05px">Toggle Active State</div>
<div style="left:150px;top:660px;width:73px;font-size:7px;line-height:10px;color:#777;text-align:right;letter-spacing:-.05px">Alt+Shift+A</div>
<div style="left:94px;top:544px;width:140px;height:1px;background:#d4d4d4"></div>
<div style="left:94px;top:561px;width:140px;height:1px;background:#d4d4d4"></div>
<div style="left:94px;top:591px;width:140px;height:1px;background:#d4d4d4"></div>
<div style="left:234px;top:489px;width:113px;height:28px;background:#f2f2f2;box-shadow:1px 1px 2px rgba(0,0,0,.45)"></div>
<div style="left:235px;top:490px;width:111px;height:13px;background:#84c6f8"></div>
<div style="left:253px;top:492px;font-size:7px;letter-spacing:-.05px;line-height:10px;color:#111">Create Server</div>
<div style="left:253px;top:505px;font-size:7px;letter-spacing:-.05px;line-height:10px;color:#111">Create Cache Player</div>
</div>
</body></html>
